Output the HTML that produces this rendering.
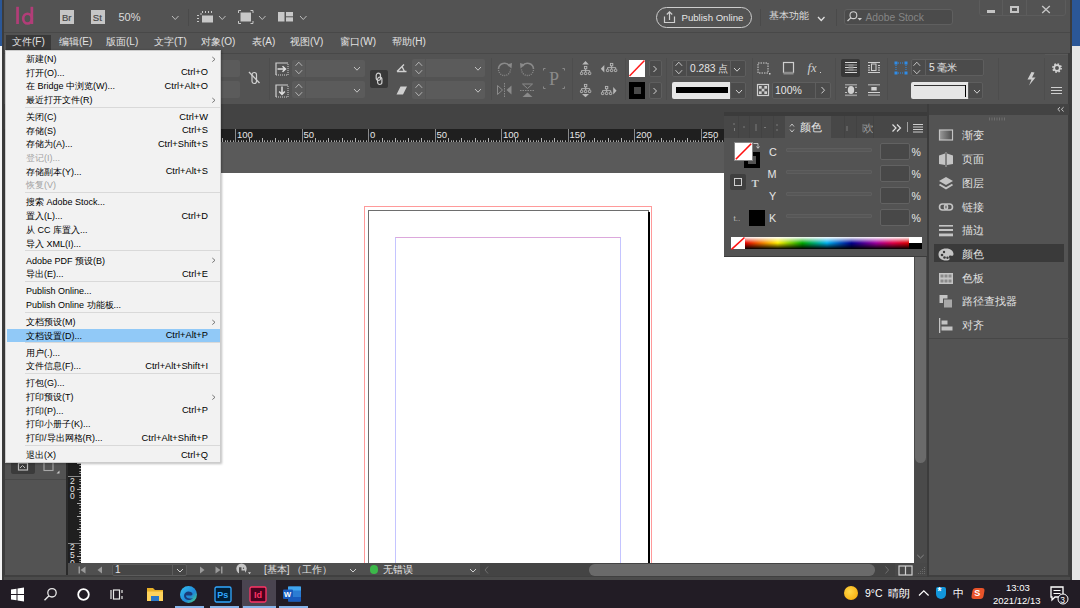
<!DOCTYPE html>
<html><head><meta charset="utf-8"><style>
*{margin:0;padding:0;box-sizing:border-box}
html,body{width:1080px;height:608px;overflow:hidden;background:#e8e8e8;font-family:"Liberation Sans",sans-serif;position:relative}
.a{position:absolute}
.t{position:absolute;white-space:nowrap;line-height:1}
svg{position:absolute;overflow:visible}
</style></head><body>
<div class="a" style="left:0;top:0;width:3px;height:46px;background:#2b5797"></div>
<div class="a" style="left:0;top:46px;width:3px;height:534px;background:#f4f4f4"></div>
<div class="a" style="left:1071px;top:0;width:9px;height:46px;background:#2b5797"></div>
<div class="a" style="left:1071px;top:46px;width:9px;height:534px;background:#e6e6e6"></div>
<div class="a" style="left:2px;top:0;width:1070px;height:580px;background:#3c3c3c"></div>
<div class="a" style="left:4px;top:0;width:1066px;height:32px;background:#535353"></div>
<div class="a" style="left:4px;top:32px;width:1066px;height:1px;background:#484848"></div>
<div class="a" style="left:4px;top:33px;width:1066px;height:20px;background:#535353"></div>
<div class="a" style="left:4px;top:53px;width:1066px;height:1px;background:#484848"></div>
<div class="a" style="left:4px;top:54px;width:1066px;height:50px;background:#535353"></div>
<div class="a" style="left:4px;top:104px;width:1066px;height:25px;background:#434343"></div>
<div class="a" style="left:5px;top:104px;width:61px;height:473px;background:#535353"></div>
<div class="a" style="left:68px;top:129px;width:859px;height:13px;background:#1f1f1f"></div>
<div class="a" style="left:68px;top:142px;width:859px;height:31px;background:#5a5a5a"></div>
<div class="a" style="left:68px;top:142px;width:13px;height:421px;background:#1f1f1f"></div>
<div class="a" style="left:81px;top:173px;width:833px;height:390px;background:#fff;overflow:hidden">
<div class="a" style="left:283px;top:33px;width:288px;height:500px;border:1px solid #ff9a9a"></div>
<div class="a" style="left:287px;top:37px;width:281px;height:500px;border:1px solid #6e6e6e"></div>
<div class="a" style="left:567px;top:39px;width:2px;height:500px;background:#000"></div>
<div class="a" style="left:314px;top:64px;width:226px;height:500px;border-top:1px solid #dca8dc;border-left:1px solid #c4c4ff;border-right:1px solid #c4c4ff"></div>
</div>
<div class="a" style="left:914px;top:142px;width:13px;height:421px;background:#4a4a4a"></div>
<div class="a" style="left:915px;top:173px;width:11px;height:290px;background:#6a6a6a;border-radius:6px"></div>
<div class="a" style="left:929px;top:104px;width:140px;height:473px;background:#535353"></div>
<div class="a" style="left:929px;top:104px;width:140px;height:10px;background:#3b3b3b"></div>
<div class="a" style="left:68px;top:563px;width:859px;height:13px;background:#535353"></div>
<div class="a" style="left:0;top:579.8px;width:1080px;height:28.2px;background:#221c25"></div>
<svg style="left:14px;top:5px" width="22" height="21" viewBox="0 0 22 21"><rect x="2.2" y="1.8" width="2.7" height="17.2" fill="#b23d78"/><ellipse cx="13.5" cy="13.6" rx="4.3" ry="4.9" fill="none" stroke="#b23d78" stroke-width="2.6"/><rect x="16.5" y="1.8" width="2.7" height="17.2" fill="#b23d78"/></svg>
<div class="a" style="left:60px;top:10px;width:14px;height:14px;background:#c6c6c6;"></div>
<div class="t" style="left:62px;top:12.64px;font-size:9.5px;color:#484848;-webkit-text-stroke:0.2px #484848">Br</div>
<div class="a" style="left:91px;top:10px;width:13.5px;height:14px;background:#c6c6c6;"></div>
<div class="t" style="left:92.8px;top:12.64px;font-size:9.5px;color:#484848;-webkit-text-stroke:0.2px #484848">St</div>
<div class="t" style="left:118.5px;top:11.61px;font-size:11px;color:#dcdcdc;">50%</div>
<svg style="left:171px;top:14.5px" width="8.5" height="5.5" viewBox="0 0 8.5 5.5"><path d="M1 1 L4.25 4.5 L7.5 1" fill="none" stroke="#bdbdbd" stroke-width="1"/></svg>
<div class="a" style="left:188px;top:9px;width:1px;height:17px;background:#4a4a4a;"></div>
<svg style="left:196px;top:10px" width="18" height="14" viewBox="0 0 18 14"><g fill="#c8c8c8"><rect x="6" y="5.5" width="11" height="7"/><rect x="6" y="1" width="1" height="2"/><rect x="9" y="1" width="1" height="2"/><rect x="12" y="1" width="1" height="2"/><rect x="15" y="1" width="1" height="2"/><rect x="4" y="3.5" width="2" height="1"/><rect x="1" y="5" width="2" height="1"/><rect x="1" y="8" width="2" height="1"/><rect x="1" y="11" width="2" height="1"/></g></svg>
<svg style="left:218px;top:14.5px" width="8.5" height="5.5" viewBox="0 0 8.5 5.5"><path d="M1 1 L4.25 4.5 L7.5 1" fill="none" stroke="#bdbdbd" stroke-width="1"/></svg>
<svg style="left:237px;top:9px" width="18" height="16" viewBox="0 0 18 16"><rect x="3.5" y="3.5" width="10.5" height="9" fill="#c8c8c8"/><path d="M1.5 4 V1.5 H4 M13.5 1.5 H16 V4 M16 12 V14.5 H13.5 M4 14.5 H1.5 V12" fill="none" stroke="#c8c8c8" stroke-width="1"/></svg>
<svg style="left:258px;top:14.5px" width="8.5" height="5.5" viewBox="0 0 8.5 5.5"><path d="M1 1 L4.25 4.5 L7.5 1" fill="none" stroke="#bdbdbd" stroke-width="1"/></svg>
<svg style="left:277px;top:11px" width="18" height="12" viewBox="0 0 18 12"><g fill="#c8c8c8"><rect x="1" y="1" width="6.5" height="9.5"/><rect x="9" y="1" width="7" height="4.3"/><rect x="9" y="6.3" width="7" height="4.2"/></g></svg>
<svg style="left:299px;top:14.5px" width="8.5" height="5.5" viewBox="0 0 8.5 5.5"><path d="M1 1 L4.25 4.5 L7.5 1" fill="none" stroke="#bdbdbd" stroke-width="1"/></svg>
<div class="a" style="left:656px;top:7px;width:96px;height:21px;border:1px solid #cdcdcd;border-radius:11px"></div>
<svg style="left:663px;top:10px" width="14" height="14" viewBox="0 0 14 14"><path d="M1.5 6.5 V12.5 H11.5 V6.5 M6.5 10 V2 M3.8 4.5 L6.5 1.8 L9.2 4.5" fill="none" stroke="#cfcfcf" stroke-width="1.2"/></svg>
<div class="t" style="left:681.5px;top:12.80px;font-size:9.6px;color:#e6e6e6;">Publish Online</div>
<div class="a" style="left:760px;top:9px;width:1px;height:17px;background:#4a4a4a;"></div>
<div class="t" style="left:769px;top:11.10px;font-size:10px;color:#dcdcdc;">基本功能</div>
<svg style="left:817px;top:16px" width="8.5" height="5.5" viewBox="0 0 8.5 5.5"><path d="M1 1 L4.25 4.5 L7.5 1" fill="none" stroke="#e0e0e0" stroke-width="1.3"/></svg>
<div class="a" style="left:836px;top:9px;width:1px;height:17px;background:#4a4a4a;"></div>
<div class="a" style="left:844px;top:8.5px;width:109px;height:16.5px;background:#4b4b4b;border:1px solid #5f5f5f;border-radius:3px"></div>
<svg style="left:846px;top:10px" width="18" height="14" viewBox="0 0 18 14"><circle cx="7.4" cy="5.2" r="3.4" fill="none" stroke="#cfcfcf" stroke-width="1.1"/><path d="M5 7.6 L1.5 11" stroke="#cfcfcf" stroke-width="1.2"/><path d="M11.5 8 H16 L13.75 10.5Z" fill="#cfcfcf"/></svg>
<div class="t" style="left:865.5px;top:12.85px;font-size:10.3px;color:#858585;">Adobe Stock</div>
<div class="a" style="left:979px;top:-2px;width:87px;height:18.3px;border:1px solid #5c5c5c;border-radius:3px"></div>
<div class="a" style="left:1002px;top:0px;width:1px;height:16px;background:#5c5c5c;"></div>
<div class="a" style="left:1025.5px;top:0px;width:1px;height:16px;background:#5c5c5c;"></div>
<div class="a" style="left:987px;top:10px;width:8px;height:3px;background:#c4c4c4;"></div>
<div class="a" style="left:1010px;top:6px;width:9px;height:7px;border:2px solid #c4c4c4"></div>
<svg style="left:1041px;top:5px" width="10" height="9" viewBox="0 0 10 9"><path d="M1.2 1 L8.8 8 M8.8 1 L1.2 8" stroke="#c4c4c4" stroke-width="1.4"/></svg>
<div class="a" style="left:6px;top:35px;width:45px;height:14.5px;background:#393939;"></div>
<div class="t" style="left:12px;top:37.40px;font-size:10px;color:#e2e2e2;">文件(F)</div>
<div class="t" style="left:59px;top:37.40px;font-size:10px;color:#e2e2e2;">编辑(E)</div>
<div class="t" style="left:106px;top:37.40px;font-size:10px;color:#e2e2e2;">版面(L)</div>
<div class="t" style="left:154px;top:37.40px;font-size:10px;color:#e2e2e2;">文字(T)</div>
<div class="t" style="left:201px;top:37.40px;font-size:10px;color:#e2e2e2;">对象(O)</div>
<div class="t" style="left:252px;top:37.40px;font-size:10px;color:#e2e2e2;">表(A)</div>
<div class="t" style="left:290px;top:37.40px;font-size:10px;color:#e2e2e2;">视图(V)</div>
<div class="t" style="left:340px;top:37.40px;font-size:10px;color:#e2e2e2;">窗口(W)</div>
<div class="t" style="left:392px;top:37.40px;font-size:10px;color:#e2e2e2;">帮助(H)</div>
<div class="a" style="left:200px;top:59.6px;width:40px;height:17.4px;background:#5b5b5b;border-radius:2px;"></div>
<div class="a" style="left:200px;top:81px;width:40px;height:17.4px;background:#5b5b5b;border-radius:2px;"></div>
<svg style="left:247px;top:70px" width="14" height="16" viewBox="0 0 14 16"><rect x="5" y="2.5" width="4.5" height="11" rx="2.2" fill="none" stroke="#cfcfcf" stroke-width="1.2"/><path d="M2 2 L12.5 13" stroke="#cfcfcf" stroke-width="1.3"/></svg>
<div class="a" style="left:269px;top:58px;width:1px;height:42px;background:#4d4d4d;"></div>
<svg style="left:274px;top:61px" width="16" height="16" viewBox="0 0 16 16"><path d="M2 14 V2 H14" fill="none" stroke="#cfcfcf" stroke-width="1.2"/><path d="M14 3 V14 H2" fill="none" stroke="#cfcfcf" stroke-width="1" stroke-dasharray="1 1"/><path d="M3.5 8 H11 M8.5 5.2 L11.5 8 L8.5 10.8" fill="none" stroke="#e0e0e0" stroke-width="1.5"/></svg>
<svg style="left:274px;top:83px" width="16" height="16" viewBox="0 0 16 16"><path d="M2 14 V2 H14" fill="none" stroke="#cfcfcf" stroke-width="1.2"/><path d="M14 3 V14 H2" fill="none" stroke="#cfcfcf" stroke-width="1" stroke-dasharray="1 1"/><path d="M8 3.5 V11 M5.2 8.5 L8 11.5 L10.8 8.5" fill="none" stroke="#e0e0e0" stroke-width="1.5"/></svg>
<div class="a" style="left:291.5px;top:59.6px;width:73px;height:17.4px;background:#5b5b5b;border-radius:2px;"></div>
<div class="a" style="left:305px;top:59.6px;width:1px;height:17.4px;background:#555555;"></div>
<svg style="left:293.7px;top:60.3px" width="10" height="16" viewBox="0 0 10 16"><path d="M1.5 5.8 L4.8 2.2 L8.1 5.8 M1.5 10.2 L4.8 13.8 L8.1 10.2" fill="none" stroke="#bdbdbd" stroke-width="0.9"/></svg>
<svg style="left:353px;top:66.4px" width="8" height="5.2" viewBox="0 0 8 5.2"><path d="M1 1 L4.0 4.2 L7 1" fill="none" stroke="#c4c4c4" stroke-width="1"/></svg>
<div class="a" style="left:291.5px;top:81px;width:73px;height:17.4px;background:#5b5b5b;border-radius:2px;"></div>
<div class="a" style="left:305px;top:81px;width:1px;height:17.4px;background:#555555;"></div>
<svg style="left:293.7px;top:81.7px" width="10" height="16" viewBox="0 0 10 16"><path d="M1.5 5.8 L4.8 2.2 L8.1 5.8 M1.5 10.2 L4.8 13.8 L8.1 10.2" fill="none" stroke="#bdbdbd" stroke-width="0.9"/></svg>
<svg style="left:353px;top:87.8px" width="8" height="5.2" viewBox="0 0 8 5.2"><path d="M1 1 L4.0 4.2 L7 1" fill="none" stroke="#c4c4c4" stroke-width="1"/></svg>
<div class="a" style="left:370px;top:70px;width:18px;height:18px;background:#383838;border-radius:2px"></div>
<svg style="left:374px;top:72px" width="10" height="14" viewBox="0 0 10 14"><rect x="2.2" y="1.2" width="4.3" height="7.3" rx="2.15" fill="none" stroke="#d0d0d0" stroke-width="1.2"/><rect x="3.6" y="5.2" width="4.3" height="7.3" rx="2.15" fill="none" stroke="#d0d0d0" stroke-width="1.2"/></svg>
<svg style="left:395px;top:62px" width="14" height="12" viewBox="0 0 14 12"><path d="M2 9.5 H11.5 M2 9.5 L9 2.5 M7 4.5 L9.5 9.5" fill="none" stroke="#d0d0d0" stroke-width="1.4"/></svg>
<svg style="left:395px;top:84px" width="14" height="12" viewBox="0 0 14 12"><path d="M5.5 2.5 H12 L8 10.5 H1.5Z" fill="#cfcfcf"/></svg>
<div class="a" style="left:411.7px;top:59.3px;width:73.3px;height:17.5px;background:#5b5b5b;border-radius:2px;"></div>
<div class="a" style="left:425px;top:59.3px;width:1px;height:17.5px;background:#555555;"></div>
<svg style="left:413.7px;top:60.0px" width="10" height="16" viewBox="0 0 10 16"><path d="M1.5 5.8 L4.8 2.2 L8.1 5.8 M1.5 10.2 L4.8 13.8 L8.1 10.2" fill="none" stroke="#bdbdbd" stroke-width="0.9"/></svg>
<svg style="left:473.5px;top:66.1px" width="8" height="5.2" viewBox="0 0 8 5.2"><path d="M1 1 L4.0 4.2 L7 1" fill="none" stroke="#c4c4c4" stroke-width="1"/></svg>
<div class="a" style="left:411.7px;top:81px;width:73.3px;height:17.5px;background:#5b5b5b;border-radius:2px;"></div>
<div class="a" style="left:425px;top:81px;width:1px;height:17.5px;background:#555555;"></div>
<svg style="left:413.7px;top:81.7px" width="10" height="16" viewBox="0 0 10 16"><path d="M1.5 5.8 L4.8 2.2 L8.1 5.8 M1.5 10.2 L4.8 13.8 L8.1 10.2" fill="none" stroke="#bdbdbd" stroke-width="0.9"/></svg>
<svg style="left:473.5px;top:87.8px" width="8" height="5.2" viewBox="0 0 8 5.2"><path d="M1 1 L4.0 4.2 L7 1" fill="none" stroke="#c4c4c4" stroke-width="1"/></svg>
<div class="a" style="left:491px;top:58px;width:1px;height:42px;background:#4d4d4d;"></div>
<svg style="left:496px;top:60px" width="17" height="16" viewBox="0 0 17 16"><path d="M2.5 9 A6 6 0 0 1 13.5 6" fill="none" stroke="#8a8a8a" stroke-width="1.6"/><path d="M11 4.5 L16 3 L15.5 8.5Z" fill="#8a8a8a"/><path d="M14.5 9.5 A6 6 0 0 1 2.5 9.5" fill="none" stroke="#8a8a8a" stroke-width="1.3" stroke-dasharray="1 1.1"/></svg>
<svg style="left:519px;top:60px" width="17" height="16" viewBox="0 0 17 16"><path d="M14.5 9 A6 6 0 0 0 3.5 6" fill="none" stroke="#8a8a8a" stroke-width="1.6"/><path d="M6 4.5 L1 3 L1.5 8.5Z" fill="#8a8a8a"/><path d="M2.5 9.5 A6 6 0 0 0 14.5 9.5" fill="none" stroke="#8a8a8a" stroke-width="1.3" stroke-dasharray="1 1.1"/></svg>
<svg style="left:496px;top:82px" width="17" height="16" viewBox="0 0 17 16"><path d="M8.5 1 V15" stroke="#8a8a8a" stroke-width="1" stroke-dasharray="1.5 1"/><path d="M1.5 3.5 V12.5 L6.5 8Z" fill="none" stroke="#8a8a8a" stroke-width="1"/><path d="M15.5 3.5 V12.5 L10.5 8Z" fill="#8a8a8a"/></svg>
<svg style="left:519px;top:82px" width="17" height="16" viewBox="0 0 17 16"><path d="M1 8.5 H16" stroke="#8a8a8a" stroke-width="1" stroke-dasharray="1.5 1"/><path d="M3.5 2 H13.5 L8.5 6.5Z" fill="none" stroke="#8a8a8a" stroke-width="1"/><path d="M3.5 15 H13.5 L8.5 10.5Z" fill="#8a8a8a"/></svg>
<svg style="left:542px;top:67px" width="24" height="24" viewBox="0 0 24 24"><path d="M1.5 3.5 V1.5 H3.5 M20.5 1.5 H22.5 V3.5 M22.5 19.5 V21.5 H20.5 M3.5 21.5 H1.5 V19.5" fill="none" stroke="#8a8a8a" stroke-width="1"/></svg>
<div class="t" style="left:549px;top:69.98px;font-size:18px;color:#8a8a8a;font-family:Liberation Serif,serif">P</div>
<div class="a" style="left:572px;top:58px;width:1px;height:42px;background:#4d4d4d;"></div>
<svg style="left:575px;top:56px" width="50" height="44" viewBox="0 0 50 44"><g fill="none" stroke="#b8b8b8" stroke-width="0.9"><rect x="9.4" y="10.4" width="2.4" height="2.4"/><path d="M10.6 12.8 V14.6 M6.5 16 V14.6 H14.7 V16 M10.6 14.6 V16"/><rect x="5.4" y="16.2" width="2.4" height="2.4" rx="0.6"/><rect x="9.4" y="16.2" width="2.4" height="2.4" rx="0.6"/><rect x="13.4" y="16.2" width="2.4" height="2.4" rx="0.6"/></g><g fill="none" stroke="#b8b8b8" stroke-width="0.9"><rect x="9.4" y="28.4" width="2.4" height="2.4"/><path d="M10.6 30.8 V32.6 M6.5 34 V32.6 H14.7 V34 M10.6 32.6 V34"/><rect x="5.4" y="34.2" width="2.4" height="2.4" rx="0.6"/><rect x="9.4" y="34.2" width="2.4" height="2.4" rx="0.6"/><rect x="13.4" y="34.2" width="2.4" height="2.4" rx="0.6"/></g><g fill="none" stroke="#b8b8b8" stroke-width="0.9"><rect x="35.4" y="7.4" width="2.4" height="2.4"/><path d="M36.6 9.8 V11.6 M32.5 13 V11.6 H40.7 V13 M36.6 11.6 V13"/><rect x="31.4" y="13.2" width="2.4" height="2.4" rx="0.6"/><rect x="35.4" y="13.2" width="2.4" height="2.4" rx="0.6"/><rect x="39.4" y="13.2" width="2.4" height="2.4" rx="0.6"/></g><g fill="none" stroke="#b8b8b8" stroke-width="0.9"><rect x="30.4" y="30.4" width="2.4" height="2.4"/><path d="M31.6 32.8 V34.6 M27.5 36 V34.6 H35.7 V36 M31.6 34.6 V36"/><rect x="26.4" y="36.2" width="2.4" height="2.4" rx="0.6"/><rect x="30.4" y="36.2" width="2.4" height="2.4" rx="0.6"/><rect x="34.4" y="36.2" width="2.4" height="2.4" rx="0.6"/></g><path d="M7.2 8.5 L10.5 5 L13.8 8.5Z" fill="#b8b8b8"/><path d="M7 38 L10.5 41.3 L14 38Z" fill="#b8b8b8"/><path d="M29.3 9 L25.8 12.8 L29.3 16.6Z" fill="#b8b8b8"/><path d="M38.2 31 L41.6 34.8 L38.2 38.6Z" fill="#b8b8b8"/></svg>
<div class="a" style="left:625px;top:58px;width:1px;height:42px;background:#4d4d4d;"></div>
<div class="a" style="left:629px;top:60px;width:16px;height:16.5px;background:#ffffff;"></div>
<svg style="left:629px;top:60px" width="16" height="17" viewBox="0 0 16 17"><path d="M0.5 16 L15.5 0.5" stroke="#ff1a1a" stroke-width="1.5"/></svg>
<div class="a" style="left:629px;top:82px;width:16px;height:16.5px;background:#000000;"></div>
<div class="a" style="left:633.5px;top:86.5px;width:7px;height:7.5px;background:#4a4a4a;"></div>
<div class="a" style="left:648.5px;top:60px;width:13px;height:16.5px;background:#4b4b4b;border:1px solid #5e5e5e;border-radius:2px"></div>
<svg style="left:652px;top:64.5px" width="6" height="8" viewBox="0 0 6 8"><path d="M1.5 1 L4.5 4 L1.5 7" fill="none" stroke="#cfcfcf" stroke-width="1"/></svg>
<div class="a" style="left:648.5px;top:82px;width:13px;height:16.5px;background:#4b4b4b;border:1px solid #5e5e5e;border-radius:2px"></div>
<svg style="left:652px;top:86.5px" width="6" height="8" viewBox="0 0 6 8"><path d="M1.5 1 L4.5 4 L1.5 7" fill="none" stroke="#cfcfcf" stroke-width="1"/></svg>
<div class="a" style="left:666px;top:58px;width:1px;height:42px;background:#4d4d4d;"></div>
<div class="a" style="left:672.3px;top:60px;width:74px;height:16.5px;background:#4b4b4b;border:1px solid #5e5e5e;border-radius:2px"></div>
<div class="a" style="left:686px;top:60px;width:1px;height:16.5px;background:#5e5e5e;"></div>
<div class="a" style="left:730px;top:60px;width:1px;height:16.5px;background:#5e5e5e;"></div>
<svg style="left:673.7px;top:60.3px" width="10" height="16" viewBox="0 0 10 16"><path d="M1.5 5.8 L4.8 2.2 L8.1 5.8 M1.5 10.2 L4.8 13.8 L8.1 10.2" fill="none" stroke="#cfcfcf" stroke-width="0.9"/></svg>
<div class="t" style="left:690px;top:63.60px;font-size:10.2px;color:#e6e6e6;">0.283 点</div>
<svg style="left:733px;top:66.5px" width="8" height="5.2" viewBox="0 0 8 5.2"><path d="M1 1 L4.0 4.2 L7 1" fill="none" stroke="#cfcfcf" stroke-width="1"/></svg>
<div class="a" style="left:672.3px;top:82px;width:58px;height:16.5px;background:#e6e6e6;border-radius:2px 0 0 2px"></div>
<div class="a" style="left:676px;top:87px;width:52px;height:5.5px;background:#000;"></div>
<div class="a" style="left:730px;top:82px;width:16.3px;height:16.5px;background:#4b4b4b;border:1px solid #5e5e5e;border-radius:0 2px 2px 0"></div>
<svg style="left:734.5px;top:88.5px" width="8" height="5.2" viewBox="0 0 8 5.2"><path d="M1 1 L4.0 4.2 L7 1" fill="none" stroke="#cfcfcf" stroke-width="1"/></svg>
<div class="a" style="left:752px;top:58px;width:1px;height:42px;background:#4d4d4d;"></div>
<svg style="left:756px;top:61px" width="16" height="15" viewBox="0 0 16 15"><path d="M2 2 H12 V12 H2Z" fill="none" stroke="#cfcfcf" stroke-width="1" stroke-dasharray="1.5 1"/><rect x="13" y="12" width="1.5" height="1.5" fill="#cfcfcf"/></svg>
<svg style="left:781px;top:61px" width="16" height="15" viewBox="0 0 16 15"><rect x="2.5" y="1.5" width="10" height="10" fill="none" stroke="#cfcfcf" stroke-width="1.2"/><rect x="2.5" y="11" width="10" height="2.5" fill="#8d8d8d"/></svg>
<div class="t" style="left:807.5px;top:62.17px;font-size:12.5px;color:#d0d0d0;font-style:italic;font-family:Liberation Serif,serif">fx</div>
<div class="a" style="left:819.5px;top:71.8px;width:1.2px;height:1.2px;background:#cfcfcf;"></div>
<svg style="left:756px;top:83px" width="15" height="15" viewBox="0 0 15 15"><rect x="1.5" y="1.5" width="11" height="11" fill="none" stroke="#cfcfcf" stroke-width="1.2"/><g fill="#cfcfcf"><rect x="3" y="3" width="2.7" height="2.7"/><rect x="8.3" y="3" width="2.7" height="2.7"/><rect x="5.7" y="5.7" width="2.7" height="2.7"/><rect x="3" y="8.3" width="2.7" height="2.7"/><rect x="8.3" y="8.3" width="2.7" height="2.7"/></g></svg>
<div class="a" style="left:772.4px;top:81.5px;width:59px;height:17.3px;background:#4b4b4b;border:1px solid #5e5e5e;border-radius:2px"></div>
<div class="a" style="left:815px;top:81.5px;width:1px;height:17.3px;background:#5e5e5e;"></div>
<div class="t" style="left:775px;top:85.16px;font-size:10.5px;color:#e6e6e6;">100%</div>
<svg style="left:820px;top:86px" width="6" height="9" viewBox="0 0 6 9"><path d="M1.5 1 L4.5 4.2 L1.5 7.4" fill="none" stroke="#cfcfcf" stroke-width="1"/></svg>
<div class="a" style="left:834.5px;top:58px;width:1px;height:42px;background:#4d4d4d;"></div>
<div class="a" style="left:841.4px;top:58.5px;width:19px;height:18.3px;background:#383838;border-radius:2px"></div>
<svg style="left:844px;top:61px" width="14" height="13" viewBox="0 0 14 13"><g fill="#d8d8d8"><rect x="1" y="1" width="12" height="1"/><rect x="1" y="3.5" width="12" height="1" fill="#a0a0a0"/><rect x="1" y="6" width="12" height="1"/><rect x="1" y="8.5" width="12" height="1" fill="#a0a0a0"/><rect x="1" y="11" width="12" height="1"/></g><rect x="4.5" y="3" width="5" height="7" fill="#8a8a8a" opacity="0.7"/></svg>
<svg style="left:867px;top:61px" width="14" height="13" viewBox="0 0 14 13"><g fill="#cfcfcf"><rect x="1" y="1" width="12" height="1"/><rect x="1" y="11" width="12" height="1"/><rect x="1" y="4" width="2" height="1"/><rect x="11" y="4" width="2" height="1"/><rect x="1" y="6.3" width="2" height="1"/><rect x="11" y="6.3" width="2" height="1"/><rect x="1" y="8.6" width="2" height="1"/><rect x="11" y="8.6" width="2" height="1"/></g><rect x="4.5" y="3" width="4.5" height="6.5" fill="none" stroke="#cfcfcf" stroke-width="1"/></svg>
<svg style="left:844px;top:83px" width="14" height="14" viewBox="0 0 14 14"><g fill="#bdbdbd"><rect x="1" y="1" width="12" height="1.5" fill="#9a9a9a"/><rect x="1" y="3.8" width="2" height="1"/><rect x="11" y="3.8" width="2" height="1"/><rect x="1" y="9" width="2" height="1"/><rect x="11" y="9" width="2" height="1"/><rect x="1" y="11.5" width="12" height="1.6" fill="#9a9a9a"/></g><ellipse cx="7" cy="6.9" rx="3.2" ry="4" fill="#d0d0d0"/></svg>
<svg style="left:867px;top:83px" width="14" height="14" viewBox="0 0 14 14"><g><rect x="1" y="1" width="12" height="1.5" fill="#9a9a9a"/><rect x="4.3" y="4" width="5.4" height="3.5" fill="#d4d4d4"/><rect x="1" y="9" width="12" height="1" fill="#d4d4d4"/><rect x="1" y="11.3" width="12" height="1.6" fill="#9a9a9a"/></g></svg>
<div class="a" style="left:887px;top:58px;width:1px;height:42px;background:#4d4d4d;"></div>
<svg style="left:893px;top:60px" width="16" height="16" viewBox="0 0 16 16"><g fill="#2f8ce8"><rect x="1.5" y="1.5" width="3" height="3"/><rect x="11.5" y="1.5" width="3" height="3"/><rect x="1.5" y="11.5" width="3" height="3"/><rect x="11.5" y="11.5" width="3" height="3"/></g><path d="M3 5 V11 M13 5 V11 M5 3 H11 M5 13 H11" stroke="#2f8ce8" stroke-width="1" stroke-dasharray="1 1"/></svg>
<div class="a" style="left:911px;top:59.4px;width:72.5px;height:16.8px;background:#4b4b4b;border:1px solid #5e5e5e;border-radius:2px"></div>
<div class="a" style="left:925px;top:59.4px;width:1px;height:16.8px;background:#5e5e5e;"></div>
<svg style="left:912.2px;top:59.8px" width="10" height="16" viewBox="0 0 10 16"><path d="M1.5 5.8 L4.8 2.2 L8.1 5.8 M1.5 10.2 L4.8 13.8 L8.1 10.2" fill="none" stroke="#cfcfcf" stroke-width="0.9"/></svg>
<div class="t" style="left:929px;top:63.20px;font-size:10.2px;color:#e6e6e6;">5 毫米</div>
<div class="a" style="left:911px;top:82px;width:57.5px;height:16.8px;background:#e6e6e6;border-radius:2px 0 0 2px"></div>
<div class="a" style="left:914px;top:84.5px;width:52px;height:1px;background:#333;"></div>
<div class="a" style="left:965px;top:84.5px;width:1.2px;height:12px;background:#000;"></div>
<div class="a" style="left:968.3px;top:82px;width:15.2px;height:16.8px;background:#4b4b4b;border:1px solid #5e5e5e;border-radius:0 2px 2px 0"></div>
<svg style="left:972.5px;top:88.5px" width="8" height="5.2" viewBox="0 0 8 5.2"><path d="M1 1 L4.0 4.2 L7 1" fill="none" stroke="#cfcfcf" stroke-width="1"/></svg>
<div class="a" style="left:998px;top:58px;width:1px;height:42px;background:#4d4d4d;"></div>
<svg style="left:1025px;top:71px" width="13" height="16" viewBox="0 0 13 16"><path d="M6.5 1 L2.5 8.5 H6.5 L4 14.5 L10.5 6.5 H7 L9.5 1.5Z" fill="#cfcfcf"/></svg>
<div class="a" style="left:1044px;top:58px;width:1px;height:42px;background:#4d4d4d;"></div>
<svg style="left:1051px;top:61.5px" width="12" height="12" viewBox="0 0 12 12"><circle cx="6" cy="6" r="4.1" fill="none" stroke="#d4d4d4" stroke-width="1.6" stroke-dasharray="1.6 1.62"/><circle cx="6" cy="6" r="2.8" fill="none" stroke="#d4d4d4" stroke-width="1.7"/></svg>
<svg style="left:1050px;top:85px" width="14" height="10" viewBox="0 0 14 10"><path d="M1 2.5 H12 M1 5.5 H12 M1 8.5 H12" stroke="#cfcfcf" stroke-width="1"/></svg>
<svg style="left:68px;top:129px" width="656" height="13" viewBox="0 0 656 13"><rect x="0" y="11.3" width="1" height="1.7" fill="#a8a8a8"/><rect x="2" y="11.3" width="1" height="1.7" fill="#a8a8a8"/><rect x="5" y="11.3" width="1" height="1.7" fill="#a8a8a8"/><rect x="8" y="9" width="1" height="4" fill="#b0b0b0"/><rect x="10" y="11.3" width="1" height="1.7" fill="#a8a8a8"/><rect x="13" y="11.3" width="1" height="1.7" fill="#a8a8a8"/><rect x="16" y="11.3" width="1" height="1.7" fill="#a8a8a8"/><rect x="18" y="11.3" width="1" height="1.7" fill="#a8a8a8"/><rect x="21" y="9" width="1" height="4" fill="#b0b0b0"/><rect x="24" y="11.3" width="1" height="1.7" fill="#a8a8a8"/><rect x="26" y="11.3" width="1" height="1.7" fill="#a8a8a8"/><rect x="29" y="11.3" width="1" height="1.7" fill="#a8a8a8"/><rect x="32" y="11.3" width="1" height="1.7" fill="#a8a8a8"/><rect x="34" y="0" width="1" height="13" fill="#8a8a8a"/><rect x="37" y="11.3" width="1" height="1.7" fill="#a8a8a8"/><rect x="40" y="11.3" width="1" height="1.7" fill="#a8a8a8"/><rect x="42" y="11.3" width="1" height="1.7" fill="#a8a8a8"/><rect x="45" y="11.3" width="1" height="1.7" fill="#a8a8a8"/><rect x="48" y="9" width="1" height="4" fill="#b0b0b0"/><rect x="50" y="11.3" width="1" height="1.7" fill="#a8a8a8"/><rect x="53" y="11.3" width="1" height="1.7" fill="#a8a8a8"/><rect x="55" y="11.3" width="1" height="1.7" fill="#a8a8a8"/><rect x="58" y="11.3" width="1" height="1.7" fill="#a8a8a8"/><rect x="61" y="9" width="1" height="4" fill="#b0b0b0"/><rect x="63" y="11.3" width="1" height="1.7" fill="#a8a8a8"/><rect x="66" y="11.3" width="1" height="1.7" fill="#a8a8a8"/><rect x="69" y="11.3" width="1" height="1.7" fill="#a8a8a8"/><rect x="71" y="11.3" width="1" height="1.7" fill="#a8a8a8"/><rect x="74" y="9" width="1" height="4" fill="#b0b0b0"/><rect x="77" y="11.3" width="1" height="1.7" fill="#a8a8a8"/><rect x="79" y="11.3" width="1" height="1.7" fill="#a8a8a8"/><rect x="82" y="11.3" width="1" height="1.7" fill="#a8a8a8"/><rect x="85" y="11.3" width="1" height="1.7" fill="#a8a8a8"/><rect x="87" y="9" width="1" height="4" fill="#b0b0b0"/><rect x="90" y="11.3" width="1" height="1.7" fill="#a8a8a8"/><rect x="93" y="11.3" width="1" height="1.7" fill="#a8a8a8"/><rect x="95" y="11.3" width="1" height="1.7" fill="#a8a8a8"/><rect x="98" y="11.3" width="1" height="1.7" fill="#a8a8a8"/><rect x="101" y="0" width="1" height="13" fill="#8a8a8a"/><rect x="103" y="11.3" width="1" height="1.7" fill="#a8a8a8"/><rect x="106" y="11.3" width="1" height="1.7" fill="#a8a8a8"/><rect x="109" y="11.3" width="1" height="1.7" fill="#a8a8a8"/><rect x="111" y="11.3" width="1" height="1.7" fill="#a8a8a8"/><rect x="114" y="9" width="1" height="4" fill="#b0b0b0"/><rect x="117" y="11.3" width="1" height="1.7" fill="#a8a8a8"/><rect x="119" y="11.3" width="1" height="1.7" fill="#a8a8a8"/><rect x="122" y="11.3" width="1" height="1.7" fill="#a8a8a8"/><rect x="125" y="11.3" width="1" height="1.7" fill="#a8a8a8"/><rect x="127" y="9" width="1" height="4" fill="#b0b0b0"/><rect x="130" y="11.3" width="1" height="1.7" fill="#a8a8a8"/><rect x="133" y="11.3" width="1" height="1.7" fill="#a8a8a8"/><rect x="135" y="11.3" width="1" height="1.7" fill="#a8a8a8"/><rect x="138" y="11.3" width="1" height="1.7" fill="#a8a8a8"/><rect x="141" y="9" width="1" height="4" fill="#b0b0b0"/><rect x="143" y="11.3" width="1" height="1.7" fill="#a8a8a8"/><rect x="146" y="11.3" width="1" height="1.7" fill="#a8a8a8"/><rect x="149" y="11.3" width="1" height="1.7" fill="#a8a8a8"/><rect x="151" y="11.3" width="1" height="1.7" fill="#a8a8a8"/><rect x="154" y="9" width="1" height="4" fill="#b0b0b0"/><rect x="157" y="11.3" width="1" height="1.7" fill="#a8a8a8"/><rect x="159" y="11.3" width="1" height="1.7" fill="#a8a8a8"/><rect x="162" y="11.3" width="1" height="1.7" fill="#a8a8a8"/><rect x="165" y="11.3" width="1" height="1.7" fill="#a8a8a8"/><rect x="167" y="0" width="1" height="13" fill="#8a8a8a"/><rect x="170" y="11.3" width="1" height="1.7" fill="#a8a8a8"/><rect x="173" y="11.3" width="1" height="1.7" fill="#a8a8a8"/><rect x="175" y="11.3" width="1" height="1.7" fill="#a8a8a8"/><rect x="178" y="11.3" width="1" height="1.7" fill="#a8a8a8"/><rect x="181" y="9" width="1" height="4" fill="#b0b0b0"/><rect x="183" y="11.3" width="1" height="1.7" fill="#a8a8a8"/><rect x="186" y="11.3" width="1" height="1.7" fill="#a8a8a8"/><rect x="188" y="11.3" width="1" height="1.7" fill="#a8a8a8"/><rect x="191" y="11.3" width="1" height="1.7" fill="#a8a8a8"/><rect x="194" y="9" width="1" height="4" fill="#b0b0b0"/><rect x="196" y="11.3" width="1" height="1.7" fill="#a8a8a8"/><rect x="199" y="11.3" width="1" height="1.7" fill="#a8a8a8"/><rect x="202" y="11.3" width="1" height="1.7" fill="#a8a8a8"/><rect x="204" y="11.3" width="1" height="1.7" fill="#a8a8a8"/><rect x="207" y="9" width="1" height="4" fill="#b0b0b0"/><rect x="210" y="11.3" width="1" height="1.7" fill="#a8a8a8"/><rect x="212" y="11.3" width="1" height="1.7" fill="#a8a8a8"/><rect x="215" y="11.3" width="1" height="1.7" fill="#a8a8a8"/><rect x="218" y="11.3" width="1" height="1.7" fill="#a8a8a8"/><rect x="220" y="9" width="1" height="4" fill="#b0b0b0"/><rect x="223" y="11.3" width="1" height="1.7" fill="#a8a8a8"/><rect x="226" y="11.3" width="1" height="1.7" fill="#a8a8a8"/><rect x="228" y="11.3" width="1" height="1.7" fill="#a8a8a8"/><rect x="231" y="11.3" width="1" height="1.7" fill="#a8a8a8"/><rect x="234" y="0" width="1" height="13" fill="#8a8a8a"/><rect x="236" y="11.3" width="1" height="1.7" fill="#a8a8a8"/><rect x="239" y="11.3" width="1" height="1.7" fill="#a8a8a8"/><rect x="242" y="11.3" width="1" height="1.7" fill="#a8a8a8"/><rect x="244" y="11.3" width="1" height="1.7" fill="#a8a8a8"/><rect x="247" y="9" width="1" height="4" fill="#b0b0b0"/><rect x="250" y="11.3" width="1" height="1.7" fill="#a8a8a8"/><rect x="252" y="11.3" width="1" height="1.7" fill="#a8a8a8"/><rect x="255" y="11.3" width="1" height="1.7" fill="#a8a8a8"/><rect x="258" y="11.3" width="1" height="1.7" fill="#a8a8a8"/><rect x="260" y="9" width="1" height="4" fill="#b0b0b0"/><rect x="263" y="11.3" width="1" height="1.7" fill="#a8a8a8"/><rect x="266" y="11.3" width="1" height="1.7" fill="#a8a8a8"/><rect x="268" y="11.3" width="1" height="1.7" fill="#a8a8a8"/><rect x="271" y="11.3" width="1" height="1.7" fill="#a8a8a8"/><rect x="274" y="9" width="1" height="4" fill="#b0b0b0"/><rect x="276" y="11.3" width="1" height="1.7" fill="#a8a8a8"/><rect x="279" y="11.3" width="1" height="1.7" fill="#a8a8a8"/><rect x="282" y="11.3" width="1" height="1.7" fill="#a8a8a8"/><rect x="284" y="11.3" width="1" height="1.7" fill="#a8a8a8"/><rect x="287" y="9" width="1" height="4" fill="#b0b0b0"/><rect x="290" y="11.3" width="1" height="1.7" fill="#a8a8a8"/><rect x="292" y="11.3" width="1" height="1.7" fill="#a8a8a8"/><rect x="295" y="11.3" width="1" height="1.7" fill="#a8a8a8"/><rect x="298" y="11.3" width="1" height="1.7" fill="#a8a8a8"/><rect x="300" y="0" width="1" height="13" fill="#8a8a8a"/><rect x="303" y="11.3" width="1" height="1.7" fill="#a8a8a8"/><rect x="306" y="11.3" width="1" height="1.7" fill="#a8a8a8"/><rect x="308" y="11.3" width="1" height="1.7" fill="#a8a8a8"/><rect x="311" y="11.3" width="1" height="1.7" fill="#a8a8a8"/><rect x="314" y="9" width="1" height="4" fill="#b0b0b0"/><rect x="316" y="11.3" width="1" height="1.7" fill="#a8a8a8"/><rect x="319" y="11.3" width="1" height="1.7" fill="#a8a8a8"/><rect x="321" y="11.3" width="1" height="1.7" fill="#a8a8a8"/><rect x="324" y="11.3" width="1" height="1.7" fill="#a8a8a8"/><rect x="327" y="9" width="1" height="4" fill="#b0b0b0"/><rect x="329" y="11.3" width="1" height="1.7" fill="#a8a8a8"/><rect x="332" y="11.3" width="1" height="1.7" fill="#a8a8a8"/><rect x="335" y="11.3" width="1" height="1.7" fill="#a8a8a8"/><rect x="337" y="11.3" width="1" height="1.7" fill="#a8a8a8"/><rect x="340" y="9" width="1" height="4" fill="#b0b0b0"/><rect x="343" y="11.3" width="1" height="1.7" fill="#a8a8a8"/><rect x="345" y="11.3" width="1" height="1.7" fill="#a8a8a8"/><rect x="348" y="11.3" width="1" height="1.7" fill="#a8a8a8"/><rect x="351" y="11.3" width="1" height="1.7" fill="#a8a8a8"/><rect x="353" y="9" width="1" height="4" fill="#b0b0b0"/><rect x="356" y="11.3" width="1" height="1.7" fill="#a8a8a8"/><rect x="359" y="11.3" width="1" height="1.7" fill="#a8a8a8"/><rect x="361" y="11.3" width="1" height="1.7" fill="#a8a8a8"/><rect x="364" y="11.3" width="1" height="1.7" fill="#a8a8a8"/><rect x="367" y="0" width="1" height="13" fill="#8a8a8a"/><rect x="369" y="11.3" width="1" height="1.7" fill="#a8a8a8"/><rect x="372" y="11.3" width="1" height="1.7" fill="#a8a8a8"/><rect x="375" y="11.3" width="1" height="1.7" fill="#a8a8a8"/><rect x="377" y="11.3" width="1" height="1.7" fill="#a8a8a8"/><rect x="380" y="9" width="1" height="4" fill="#b0b0b0"/><rect x="383" y="11.3" width="1" height="1.7" fill="#a8a8a8"/><rect x="385" y="11.3" width="1" height="1.7" fill="#a8a8a8"/><rect x="388" y="11.3" width="1" height="1.7" fill="#a8a8a8"/><rect x="391" y="11.3" width="1" height="1.7" fill="#a8a8a8"/><rect x="393" y="9" width="1" height="4" fill="#b0b0b0"/><rect x="396" y="11.3" width="1" height="1.7" fill="#a8a8a8"/><rect x="399" y="11.3" width="1" height="1.7" fill="#a8a8a8"/><rect x="401" y="11.3" width="1" height="1.7" fill="#a8a8a8"/><rect x="404" y="11.3" width="1" height="1.7" fill="#a8a8a8"/><rect x="407" y="9" width="1" height="4" fill="#b0b0b0"/><rect x="409" y="11.3" width="1" height="1.7" fill="#a8a8a8"/><rect x="412" y="11.3" width="1" height="1.7" fill="#a8a8a8"/><rect x="415" y="11.3" width="1" height="1.7" fill="#a8a8a8"/><rect x="417" y="11.3" width="1" height="1.7" fill="#a8a8a8"/><rect x="420" y="9" width="1" height="4" fill="#b0b0b0"/><rect x="423" y="11.3" width="1" height="1.7" fill="#a8a8a8"/><rect x="425" y="11.3" width="1" height="1.7" fill="#a8a8a8"/><rect x="428" y="11.3" width="1" height="1.7" fill="#a8a8a8"/><rect x="431" y="11.3" width="1" height="1.7" fill="#a8a8a8"/><rect x="433" y="0" width="1" height="13" fill="#8a8a8a"/><rect x="436" y="11.3" width="1" height="1.7" fill="#a8a8a8"/><rect x="439" y="11.3" width="1" height="1.7" fill="#a8a8a8"/><rect x="441" y="11.3" width="1" height="1.7" fill="#a8a8a8"/><rect x="444" y="11.3" width="1" height="1.7" fill="#a8a8a8"/><rect x="447" y="9" width="1" height="4" fill="#b0b0b0"/><rect x="449" y="11.3" width="1" height="1.7" fill="#a8a8a8"/><rect x="452" y="11.3" width="1" height="1.7" fill="#a8a8a8"/><rect x="454" y="11.3" width="1" height="1.7" fill="#a8a8a8"/><rect x="457" y="11.3" width="1" height="1.7" fill="#a8a8a8"/><rect x="460" y="9" width="1" height="4" fill="#b0b0b0"/><rect x="462" y="11.3" width="1" height="1.7" fill="#a8a8a8"/><rect x="465" y="11.3" width="1" height="1.7" fill="#a8a8a8"/><rect x="468" y="11.3" width="1" height="1.7" fill="#a8a8a8"/><rect x="470" y="11.3" width="1" height="1.7" fill="#a8a8a8"/><rect x="473" y="9" width="1" height="4" fill="#b0b0b0"/><rect x="476" y="11.3" width="1" height="1.7" fill="#a8a8a8"/><rect x="478" y="11.3" width="1" height="1.7" fill="#a8a8a8"/><rect x="481" y="11.3" width="1" height="1.7" fill="#a8a8a8"/><rect x="484" y="11.3" width="1" height="1.7" fill="#a8a8a8"/><rect x="486" y="9" width="1" height="4" fill="#b0b0b0"/><rect x="489" y="11.3" width="1" height="1.7" fill="#a8a8a8"/><rect x="492" y="11.3" width="1" height="1.7" fill="#a8a8a8"/><rect x="494" y="11.3" width="1" height="1.7" fill="#a8a8a8"/><rect x="497" y="11.3" width="1" height="1.7" fill="#a8a8a8"/><rect x="500" y="0" width="1" height="13" fill="#8a8a8a"/><rect x="502" y="11.3" width="1" height="1.7" fill="#a8a8a8"/><rect x="505" y="11.3" width="1" height="1.7" fill="#a8a8a8"/><rect x="508" y="11.3" width="1" height="1.7" fill="#a8a8a8"/><rect x="510" y="11.3" width="1" height="1.7" fill="#a8a8a8"/><rect x="513" y="9" width="1" height="4" fill="#b0b0b0"/><rect x="516" y="11.3" width="1" height="1.7" fill="#a8a8a8"/><rect x="518" y="11.3" width="1" height="1.7" fill="#a8a8a8"/><rect x="521" y="11.3" width="1" height="1.7" fill="#a8a8a8"/><rect x="524" y="11.3" width="1" height="1.7" fill="#a8a8a8"/><rect x="526" y="9" width="1" height="4" fill="#b0b0b0"/><rect x="529" y="11.3" width="1" height="1.7" fill="#a8a8a8"/><rect x="532" y="11.3" width="1" height="1.7" fill="#a8a8a8"/><rect x="534" y="11.3" width="1" height="1.7" fill="#a8a8a8"/><rect x="537" y="11.3" width="1" height="1.7" fill="#a8a8a8"/><rect x="540" y="9" width="1" height="4" fill="#b0b0b0"/><rect x="542" y="11.3" width="1" height="1.7" fill="#a8a8a8"/><rect x="545" y="11.3" width="1" height="1.7" fill="#a8a8a8"/><rect x="548" y="11.3" width="1" height="1.7" fill="#a8a8a8"/><rect x="550" y="11.3" width="1" height="1.7" fill="#a8a8a8"/><rect x="553" y="9" width="1" height="4" fill="#b0b0b0"/><rect x="556" y="11.3" width="1" height="1.7" fill="#a8a8a8"/><rect x="558" y="11.3" width="1" height="1.7" fill="#a8a8a8"/><rect x="561" y="11.3" width="1" height="1.7" fill="#a8a8a8"/><rect x="564" y="11.3" width="1" height="1.7" fill="#a8a8a8"/><rect x="566" y="0" width="1" height="13" fill="#8a8a8a"/><rect x="569" y="11.3" width="1" height="1.7" fill="#a8a8a8"/><rect x="572" y="11.3" width="1" height="1.7" fill="#a8a8a8"/><rect x="574" y="11.3" width="1" height="1.7" fill="#a8a8a8"/><rect x="577" y="11.3" width="1" height="1.7" fill="#a8a8a8"/><rect x="580" y="9" width="1" height="4" fill="#b0b0b0"/><rect x="582" y="11.3" width="1" height="1.7" fill="#a8a8a8"/><rect x="585" y="11.3" width="1" height="1.7" fill="#a8a8a8"/><rect x="587" y="11.3" width="1" height="1.7" fill="#a8a8a8"/><rect x="590" y="11.3" width="1" height="1.7" fill="#a8a8a8"/><rect x="593" y="9" width="1" height="4" fill="#b0b0b0"/><rect x="595" y="11.3" width="1" height="1.7" fill="#a8a8a8"/><rect x="598" y="11.3" width="1" height="1.7" fill="#a8a8a8"/><rect x="601" y="11.3" width="1" height="1.7" fill="#a8a8a8"/><rect x="603" y="11.3" width="1" height="1.7" fill="#a8a8a8"/><rect x="606" y="9" width="1" height="4" fill="#b0b0b0"/><rect x="609" y="11.3" width="1" height="1.7" fill="#a8a8a8"/><rect x="611" y="11.3" width="1" height="1.7" fill="#a8a8a8"/><rect x="614" y="11.3" width="1" height="1.7" fill="#a8a8a8"/><rect x="617" y="11.3" width="1" height="1.7" fill="#a8a8a8"/><rect x="619" y="9" width="1" height="4" fill="#b0b0b0"/><rect x="622" y="11.3" width="1" height="1.7" fill="#a8a8a8"/><rect x="625" y="11.3" width="1" height="1.7" fill="#a8a8a8"/><rect x="627" y="11.3" width="1" height="1.7" fill="#a8a8a8"/><rect x="630" y="11.3" width="1" height="1.7" fill="#a8a8a8"/><rect x="633" y="0" width="1" height="13" fill="#8a8a8a"/><rect x="635" y="11.3" width="1" height="1.7" fill="#a8a8a8"/><rect x="638" y="11.3" width="1" height="1.7" fill="#a8a8a8"/><rect x="641" y="11.3" width="1" height="1.7" fill="#a8a8a8"/><rect x="643" y="11.3" width="1" height="1.7" fill="#a8a8a8"/><rect x="646" y="9" width="1" height="4" fill="#b0b0b0"/><rect x="649" y="11.3" width="1" height="1.7" fill="#a8a8a8"/><rect x="651" y="11.3" width="1" height="1.7" fill="#a8a8a8"/><rect x="654" y="11.3" width="1" height="1.7" fill="#a8a8a8"/></svg>
<div class="t" style="left:237.0px;top:129.94px;font-size:9.5px;color:#e6e6e6;">100</div>
<div class="t" style="left:303.5px;top:129.94px;font-size:9.5px;color:#e6e6e6;">50</div>
<div class="t" style="left:370.0px;top:129.94px;font-size:9.5px;color:#e6e6e6;">0</div>
<div class="t" style="left:436.5px;top:129.94px;font-size:9.5px;color:#e6e6e6;">50</div>
<div class="t" style="left:503.0px;top:129.94px;font-size:9.5px;color:#e6e6e6;">100</div>
<div class="t" style="left:569.5px;top:129.94px;font-size:9.5px;color:#e6e6e6;">150</div>
<div class="t" style="left:636.0px;top:129.94px;font-size:9.5px;color:#e6e6e6;">200</div>
<div class="t" style="left:702.5px;top:129.94px;font-size:9.5px;color:#e6e6e6;">250</div>
<svg style="left:68px;top:142px" width="13" height="421" viewBox="0 0 13 421"><rect x="0" y="2" width="13" height="1" fill="#8a8a8a"/><rect x="11.3" y="4" width="1.7" height="1" fill="#a8a8a8"/><rect x="11.3" y="7" width="1.7" height="1" fill="#a8a8a8"/><rect x="11.3" y="10" width="1.7" height="1" fill="#a8a8a8"/><rect x="11.3" y="12" width="1.7" height="1" fill="#a8a8a8"/><rect x="9" y="15" width="4" height="1" fill="#b0b0b0"/><rect x="11.3" y="18" width="1.7" height="1" fill="#a8a8a8"/><rect x="11.3" y="20" width="1.7" height="1" fill="#a8a8a8"/><rect x="11.3" y="23" width="1.7" height="1" fill="#a8a8a8"/><rect x="11.3" y="26" width="1.7" height="1" fill="#a8a8a8"/><rect x="9" y="28" width="4" height="1" fill="#b0b0b0"/><rect x="11.3" y="31" width="1.7" height="1" fill="#a8a8a8"/><rect x="11.3" y="34" width="1.7" height="1" fill="#a8a8a8"/><rect x="11.3" y="36" width="1.7" height="1" fill="#a8a8a8"/><rect x="11.3" y="39" width="1.7" height="1" fill="#a8a8a8"/><rect x="9" y="42" width="4" height="1" fill="#b0b0b0"/><rect x="11.3" y="44" width="1.7" height="1" fill="#a8a8a8"/><rect x="11.3" y="47" width="1.7" height="1" fill="#a8a8a8"/><rect x="11.3" y="49" width="1.7" height="1" fill="#a8a8a8"/><rect x="11.3" y="52" width="1.7" height="1" fill="#a8a8a8"/><rect x="9" y="55" width="4" height="1" fill="#b0b0b0"/><rect x="11.3" y="57" width="1.7" height="1" fill="#a8a8a8"/><rect x="11.3" y="60" width="1.7" height="1" fill="#a8a8a8"/><rect x="11.3" y="63" width="1.7" height="1" fill="#a8a8a8"/><rect x="11.3" y="65" width="1.7" height="1" fill="#a8a8a8"/><rect x="0" y="68" width="13" height="1" fill="#8a8a8a"/><rect x="11.3" y="71" width="1.7" height="1" fill="#a8a8a8"/><rect x="11.3" y="73" width="1.7" height="1" fill="#a8a8a8"/><rect x="11.3" y="76" width="1.7" height="1" fill="#a8a8a8"/><rect x="11.3" y="79" width="1.7" height="1" fill="#a8a8a8"/><rect x="9" y="81" width="4" height="1" fill="#b0b0b0"/><rect x="11.3" y="84" width="1.7" height="1" fill="#a8a8a8"/><rect x="11.3" y="87" width="1.7" height="1" fill="#a8a8a8"/><rect x="11.3" y="89" width="1.7" height="1" fill="#a8a8a8"/><rect x="11.3" y="92" width="1.7" height="1" fill="#a8a8a8"/><rect x="9" y="95" width="4" height="1" fill="#b0b0b0"/><rect x="11.3" y="97" width="1.7" height="1" fill="#a8a8a8"/><rect x="11.3" y="100" width="1.7" height="1" fill="#a8a8a8"/><rect x="11.3" y="103" width="1.7" height="1" fill="#a8a8a8"/><rect x="11.3" y="105" width="1.7" height="1" fill="#a8a8a8"/><rect x="9" y="108" width="4" height="1" fill="#b0b0b0"/><rect x="11.3" y="111" width="1.7" height="1" fill="#a8a8a8"/><rect x="11.3" y="113" width="1.7" height="1" fill="#a8a8a8"/><rect x="11.3" y="116" width="1.7" height="1" fill="#a8a8a8"/><rect x="11.3" y="119" width="1.7" height="1" fill="#a8a8a8"/><rect x="9" y="121" width="4" height="1" fill="#b0b0b0"/><rect x="11.3" y="124" width="1.7" height="1" fill="#a8a8a8"/><rect x="11.3" y="127" width="1.7" height="1" fill="#a8a8a8"/><rect x="11.3" y="129" width="1.7" height="1" fill="#a8a8a8"/><rect x="11.3" y="132" width="1.7" height="1" fill="#a8a8a8"/><rect x="0" y="135" width="13" height="1" fill="#8a8a8a"/><rect x="11.3" y="137" width="1.7" height="1" fill="#a8a8a8"/><rect x="11.3" y="140" width="1.7" height="1" fill="#a8a8a8"/><rect x="11.3" y="143" width="1.7" height="1" fill="#a8a8a8"/><rect x="11.3" y="145" width="1.7" height="1" fill="#a8a8a8"/><rect x="9" y="148" width="4" height="1" fill="#b0b0b0"/><rect x="11.3" y="151" width="1.7" height="1" fill="#a8a8a8"/><rect x="11.3" y="153" width="1.7" height="1" fill="#a8a8a8"/><rect x="11.3" y="156" width="1.7" height="1" fill="#a8a8a8"/><rect x="11.3" y="159" width="1.7" height="1" fill="#a8a8a8"/><rect x="9" y="161" width="4" height="1" fill="#b0b0b0"/><rect x="11.3" y="164" width="1.7" height="1" fill="#a8a8a8"/><rect x="11.3" y="167" width="1.7" height="1" fill="#a8a8a8"/><rect x="11.3" y="169" width="1.7" height="1" fill="#a8a8a8"/><rect x="11.3" y="172" width="1.7" height="1" fill="#a8a8a8"/><rect x="9" y="175" width="4" height="1" fill="#b0b0b0"/><rect x="11.3" y="177" width="1.7" height="1" fill="#a8a8a8"/><rect x="11.3" y="180" width="1.7" height="1" fill="#a8a8a8"/><rect x="11.3" y="182" width="1.7" height="1" fill="#a8a8a8"/><rect x="11.3" y="185" width="1.7" height="1" fill="#a8a8a8"/><rect x="9" y="188" width="4" height="1" fill="#b0b0b0"/><rect x="11.3" y="190" width="1.7" height="1" fill="#a8a8a8"/><rect x="11.3" y="193" width="1.7" height="1" fill="#a8a8a8"/><rect x="11.3" y="196" width="1.7" height="1" fill="#a8a8a8"/><rect x="11.3" y="198" width="1.7" height="1" fill="#a8a8a8"/><rect x="0" y="201" width="13" height="1" fill="#8a8a8a"/><rect x="11.3" y="204" width="1.7" height="1" fill="#a8a8a8"/><rect x="11.3" y="206" width="1.7" height="1" fill="#a8a8a8"/><rect x="11.3" y="209" width="1.7" height="1" fill="#a8a8a8"/><rect x="11.3" y="212" width="1.7" height="1" fill="#a8a8a8"/><rect x="9" y="214" width="4" height="1" fill="#b0b0b0"/><rect x="11.3" y="217" width="1.7" height="1" fill="#a8a8a8"/><rect x="11.3" y="220" width="1.7" height="1" fill="#a8a8a8"/><rect x="11.3" y="222" width="1.7" height="1" fill="#a8a8a8"/><rect x="11.3" y="225" width="1.7" height="1" fill="#a8a8a8"/><rect x="9" y="228" width="4" height="1" fill="#b0b0b0"/><rect x="11.3" y="230" width="1.7" height="1" fill="#a8a8a8"/><rect x="11.3" y="233" width="1.7" height="1" fill="#a8a8a8"/><rect x="11.3" y="236" width="1.7" height="1" fill="#a8a8a8"/><rect x="11.3" y="238" width="1.7" height="1" fill="#a8a8a8"/><rect x="9" y="241" width="4" height="1" fill="#b0b0b0"/><rect x="11.3" y="244" width="1.7" height="1" fill="#a8a8a8"/><rect x="11.3" y="246" width="1.7" height="1" fill="#a8a8a8"/><rect x="11.3" y="249" width="1.7" height="1" fill="#a8a8a8"/><rect x="11.3" y="252" width="1.7" height="1" fill="#a8a8a8"/><rect x="9" y="254" width="4" height="1" fill="#b0b0b0"/><rect x="11.3" y="257" width="1.7" height="1" fill="#a8a8a8"/><rect x="11.3" y="260" width="1.7" height="1" fill="#a8a8a8"/><rect x="11.3" y="262" width="1.7" height="1" fill="#a8a8a8"/><rect x="11.3" y="265" width="1.7" height="1" fill="#a8a8a8"/><rect x="0" y="268" width="13" height="1" fill="#8a8a8a"/><rect x="11.3" y="270" width="1.7" height="1" fill="#a8a8a8"/><rect x="11.3" y="273" width="1.7" height="1" fill="#a8a8a8"/><rect x="11.3" y="276" width="1.7" height="1" fill="#a8a8a8"/><rect x="11.3" y="278" width="1.7" height="1" fill="#a8a8a8"/><rect x="9" y="281" width="4" height="1" fill="#b0b0b0"/><rect x="11.3" y="284" width="1.7" height="1" fill="#a8a8a8"/><rect x="11.3" y="286" width="1.7" height="1" fill="#a8a8a8"/><rect x="11.3" y="289" width="1.7" height="1" fill="#a8a8a8"/><rect x="11.3" y="292" width="1.7" height="1" fill="#a8a8a8"/><rect x="9" y="294" width="4" height="1" fill="#b0b0b0"/><rect x="11.3" y="297" width="1.7" height="1" fill="#a8a8a8"/><rect x="11.3" y="300" width="1.7" height="1" fill="#a8a8a8"/><rect x="11.3" y="302" width="1.7" height="1" fill="#a8a8a8"/><rect x="11.3" y="305" width="1.7" height="1" fill="#a8a8a8"/><rect x="9" y="308" width="4" height="1" fill="#b0b0b0"/><rect x="11.3" y="310" width="1.7" height="1" fill="#a8a8a8"/><rect x="11.3" y="313" width="1.7" height="1" fill="#a8a8a8"/><rect x="11.3" y="315" width="1.7" height="1" fill="#a8a8a8"/><rect x="11.3" y="318" width="1.7" height="1" fill="#a8a8a8"/><rect x="9" y="321" width="4" height="1" fill="#b0b0b0"/><rect x="11.3" y="323" width="1.7" height="1" fill="#a8a8a8"/><rect x="11.3" y="326" width="1.7" height="1" fill="#a8a8a8"/><rect x="11.3" y="329" width="1.7" height="1" fill="#a8a8a8"/><rect x="11.3" y="331" width="1.7" height="1" fill="#a8a8a8"/><rect x="0" y="334" width="13" height="1" fill="#8a8a8a"/><rect x="11.3" y="337" width="1.7" height="1" fill="#a8a8a8"/><rect x="11.3" y="339" width="1.7" height="1" fill="#a8a8a8"/><rect x="11.3" y="342" width="1.7" height="1" fill="#a8a8a8"/><rect x="11.3" y="345" width="1.7" height="1" fill="#a8a8a8"/><rect x="9" y="347" width="4" height="1" fill="#b0b0b0"/><rect x="11.3" y="350" width="1.7" height="1" fill="#a8a8a8"/><rect x="11.3" y="353" width="1.7" height="1" fill="#a8a8a8"/><rect x="11.3" y="355" width="1.7" height="1" fill="#a8a8a8"/><rect x="11.3" y="358" width="1.7" height="1" fill="#a8a8a8"/><rect x="9" y="361" width="4" height="1" fill="#b0b0b0"/><rect x="11.3" y="363" width="1.7" height="1" fill="#a8a8a8"/><rect x="11.3" y="366" width="1.7" height="1" fill="#a8a8a8"/><rect x="11.3" y="369" width="1.7" height="1" fill="#a8a8a8"/><rect x="11.3" y="371" width="1.7" height="1" fill="#a8a8a8"/><rect x="9" y="374" width="4" height="1" fill="#b0b0b0"/><rect x="11.3" y="377" width="1.7" height="1" fill="#a8a8a8"/><rect x="11.3" y="379" width="1.7" height="1" fill="#a8a8a8"/><rect x="11.3" y="382" width="1.7" height="1" fill="#a8a8a8"/><rect x="11.3" y="385" width="1.7" height="1" fill="#a8a8a8"/><rect x="9" y="387" width="4" height="1" fill="#b0b0b0"/><rect x="11.3" y="390" width="1.7" height="1" fill="#a8a8a8"/><rect x="11.3" y="393" width="1.7" height="1" fill="#a8a8a8"/><rect x="11.3" y="395" width="1.7" height="1" fill="#a8a8a8"/><rect x="11.3" y="398" width="1.7" height="1" fill="#a8a8a8"/><rect x="0" y="401" width="13" height="1" fill="#8a8a8a"/><rect x="11.3" y="403" width="1.7" height="1" fill="#a8a8a8"/><rect x="11.3" y="406" width="1.7" height="1" fill="#a8a8a8"/><rect x="11.3" y="409" width="1.7" height="1" fill="#a8a8a8"/><rect x="11.3" y="411" width="1.7" height="1" fill="#a8a8a8"/><rect x="9" y="414" width="4" height="1" fill="#b0b0b0"/><rect x="11.3" y="417" width="1.7" height="1" fill="#a8a8a8"/><rect x="11.3" y="419" width="1.7" height="1" fill="#a8a8a8"/></svg>
<div class="t" style="left:70px;top:476.94px;font-size:8.5px;color:#e6e6e6;">2</div>
<div class="t" style="left:70px;top:484.54px;font-size:8.5px;color:#e6e6e6;">0</div>
<div class="t" style="left:70px;top:492.13px;font-size:8.5px;color:#e6e6e6;">0</div>
<div class="t" style="left:70px;top:543.44px;font-size:8.5px;color:#e6e6e6;">2</div>
<div class="t" style="left:70px;top:551.04px;font-size:8.5px;color:#e6e6e6;">5</div>
<div class="t" style="left:70px;top:558.64px;font-size:8.5px;color:#e6e6e6;">0</div>
<div class="a" style="left:66px;top:104px;width:2px;height:473px;background:#2a2a2a;"></div>
<div class="a" style="left:11px;top:463px;width:24px;height:11px;background:#3b3b3b;border-radius:0 0 2px 2px"></div>
<svg style="left:17px;top:461px" width="12" height="11" viewBox="0 0 12 11"><rect x="1.5" y="2" width="9" height="7" fill="none" stroke="#bcbcbc" stroke-width="1.2"/><path d="M3 7 L5.5 4.5 L8 7" fill="none" stroke="#bcbcbc" stroke-width="1"/></svg>
<svg style="left:41px;top:461px" width="20" height="14" viewBox="0 0 20 14"><rect x="3" y="1" width="9" height="8.5" fill="none" stroke="#a8a8a8" stroke-width="1.1"/><path d="M15.5 12.5 H18.5 V9.5Z" fill="#c8c8c8"/></svg>
<div class="a" style="left:5px;top:479px;width:61px;height:1px;background:#484848;"></div>
<svg style="left:914px;top:553px" width="13" height="8" viewBox="0 0 13 8"><path d="M3.3 2 L6.5 5 L9.7 2" fill="none" stroke="#8d8d8d" stroke-width="0.9"/></svg>
<div class="a" style="left:68px;top:563px;width:859px;height:13px;background:#4f4f4f;"></div>
<div class="a" style="left:4px;top:575.3px;width:1066px;height:1.3px;background:#404040;"></div>
<div class="a" style="left:4px;top:576.6px;width:1066px;height:3.2px;background:#4b4b4b;"></div>
<svg style="left:77px;top:565px" width="10" height="10" viewBox="0 0 10 10"><rect x="1.5" y="1.5" width="1.5" height="7" fill="#9a9a9a"/><path d="M8.5 1.5 V8.5 L3.5 5Z" fill="#9a9a9a"/></svg>
<svg style="left:96px;top:565px" width="8" height="10" viewBox="0 0 8 10"><path d="M6 1.5 V8.5 L1.5 5Z" fill="#9a9a9a"/></svg>
<div class="a" style="left:111.8px;top:563.5px;width:75px;height:12.5px;background:#464646;border:1px solid #5c5c5c;border-radius:2px"></div>
<div class="a" style="left:172px;top:563.5px;width:1px;height:12.5px;background:#5c5c5c;"></div>
<div class="t" style="left:115px;top:565.10px;font-size:10px;color:#e6e6e6;">1</div>
<svg style="left:176px;top:568px" width="8" height="5" viewBox="0 0 8 5"><path d="M1 1 L4.0 4 L7 1" fill="none" stroke="#cfcfcf" stroke-width="1"/></svg>
<svg style="left:198px;top:565px" width="8" height="10" viewBox="0 0 8 10"><path d="M2 1.5 V8.5 L6.5 5Z" fill="#9a9a9a"/></svg>
<svg style="left:214px;top:565px" width="10" height="10" viewBox="0 0 10 10"><path d="M1.5 1.5 V8.5 L6.5 5Z" fill="#9a9a9a"/><rect x="7" y="1.5" width="1.5" height="7" fill="#9a9a9a"/></svg>
<svg style="left:234px;top:562.3px" width="18" height="14" viewBox="0 0 18 14"><circle cx="7.5" cy="6.8" r="5.2" fill="#c8c8c8"/><path d="M5 5.2 H7.5 V8.5 H11 V12.5 H5Z" fill="#4f4f4f"/><circle cx="9.5" cy="6.3" r="0.7" fill="#4f4f4f"/><path d="M14 10.3 H17 L15.5 12.2Z" fill="#d0d0d0"/></svg>
<div class="t" style="left:264px;top:565.10px;font-size:10px;color:#e0e0e0;">[基本]&thinsp;（工作）</div>
<svg style="left:349px;top:568px" width="8" height="5" viewBox="0 0 8 5"><path d="M1 1 L4.0 4 L7 1" fill="none" stroke="#cfcfcf" stroke-width="1"/></svg>
<div class="a" style="left:369.5px;top:565.3px;width:8.5px;height:8.5px;border-radius:50%;background:#3cb84a"></div>
<div class="t" style="left:383px;top:565.10px;font-size:10px;color:#e6e6e6;">无错误</div>
<svg style="left:469px;top:568px" width="8" height="5" viewBox="0 0 8 5"><path d="M1 1 L4.0 4 L7 1" fill="none" stroke="#cfcfcf" stroke-width="1"/></svg>
<div class="a" style="left:480px;top:563px;width:434px;height:13px;background:#444444;"></div>
<svg style="left:483px;top:565px" width="8" height="10" viewBox="0 0 8 10"><path d="M5 1.5 L2 5 L5 8.5" fill="none" stroke="#6e6e6e" stroke-width="1"/></svg>
<div class="a" style="left:589px;top:564.3px;width:286px;height:11.4px;background:#6a6a6a;border-radius:5.7px"></div>
<svg style="left:883px;top:565px" width="8" height="10" viewBox="0 0 8 10"><path d="M2.5 1.5 L5.5 5 L2.5 8.5" fill="none" stroke="#6e6e6e" stroke-width="1"/></svg>
<div class="a" style="left:895px;top:563px;width:32px;height:13px;background:#484848;"></div>
<svg style="left:898px;top:564.5px" width="15" height="11" viewBox="0 0 15 11"><rect x="1" y="1" width="13" height="9" fill="none" stroke="#d0d0d0" stroke-width="1.2"/><path d="M7.5 1 V10" stroke="#d0d0d0" stroke-width="1.2"/></svg>
<svg style="left:917px;top:566px" width="10" height="10" viewBox="0 0 10 10"><g fill="#6a6a6a"><rect x="7" y="1" width="1" height="1"/><rect x="5" y="3" width="1" height="1"/><rect x="7" y="3" width="1" height="1"/><rect x="3" y="5" width="1" height="1"/><rect x="5" y="5" width="1" height="1"/><rect x="7" y="5" width="1" height="1"/><rect x="1" y="7" width="1" height="1"/><rect x="3" y="7" width="1" height="1"/><rect x="5" y="7" width="1" height="1"/><rect x="7" y="7" width="1" height="1"/></g></svg>
<div class="a" style="left:927px;top:104px;width:2px;height:473px;background:#3c3c3c;"></div>
<div class="a" style="left:1068.3px;top:53px;width:3.3px;height:524px;background:#3e3e3e;"></div>
<div class="a" style="left:1044.5px;top:53.5px;width:23.8px;height:1px;background:#5a5a5a;"></div>
<div class="a" style="left:929px;top:104px;width:140px;height:10.5px;background:#434343;"></div>
<svg style="left:1056px;top:105px" width="9" height="8" viewBox="0 0 9 8"><path d="M4 2.2 L1.8 4.3 L4 6.4 M7.6 2.2 L5.4 4.3 L7.6 6.4" fill="none" stroke="#d8d8d8" stroke-width="0.9"/></svg>
<svg style="left:988px;top:117px" width="20" height="4" viewBox="0 0 20 4"><rect x="1.0" y="0.5" width="1" height="3" fill="#6e6e6e"/><rect x="3.5" y="0.5" width="1" height="3" fill="#6e6e6e"/><rect x="6.0" y="0.5" width="1" height="3" fill="#6e6e6e"/><rect x="8.5" y="0.5" width="1" height="3" fill="#6e6e6e"/><rect x="11.0" y="0.5" width="1" height="3" fill="#6e6e6e"/><rect x="13.5" y="0.5" width="1" height="3" fill="#6e6e6e"/><rect x="16.0" y="0.5" width="1" height="3" fill="#6e6e6e"/></svg>
<div class="a" style="left:1069px;top:104px;width:2px;height:473px;background:#3c3c3c;"></div>
<div class="a" style="left:934px;top:243.8px;width:129.5px;height:17.8px;background:#3a3a3a;"></div>
<svg style="left:938px;top:128.0px" width="16" height="15" viewBox="0 0 16 15"><defs><linearGradient id="gg" x1="0" x2="1"><stop offset="0" stop-color="#9a9a9a"/><stop offset="1" stop-color="#4a4a4a"/></linearGradient></defs><rect x="1.5" y="2" width="13" height="10" fill="url(#gg)" stroke="#c4c4c4" stroke-width="1.2"/></svg>
<div class="t" style="left:962px;top:130.01px;font-size:11.2px;color:#e0e0e0;">渐变</div>
<svg style="left:938px;top:152.0px" width="16" height="15" viewBox="0 0 16 15"><path d="M1 3.5 L7 1.5 V13 L1 12Z M9 1.5 L15 3.5 V12 L9 13Z" fill="#c4c4c4"/><path d="M8 0 V15" stroke="#c4c4c4" stroke-width="0.8"/></svg>
<div class="t" style="left:962px;top:154.01px;font-size:11.2px;color:#e0e0e0;">页面</div>
<svg style="left:938px;top:175.8px" width="16" height="15" viewBox="0 0 16 15"><path d="M8 1 L15 5 L8 9 L1 5Z" fill="#c4c4c4"/><path d="M1.5 8.5 L8 12.3 L14.5 8.5" fill="none" stroke="#c4c4c4" stroke-width="2"/></svg>
<div class="t" style="left:962px;top:177.81px;font-size:11.2px;color:#e0e0e0;">图层</div>
<svg style="left:938px;top:199.5px" width="16" height="15" viewBox="0 0 16 15"><rect x="1.5" y="4" width="8" height="6" rx="3" fill="none" stroke="#c4c4c4" stroke-width="1.6"/><rect x="6.5" y="4" width="8" height="6" rx="3" fill="none" stroke="#c4c4c4" stroke-width="1.6"/></svg>
<div class="t" style="left:962px;top:201.51px;font-size:11.2px;color:#e0e0e0;">链接</div>
<svg style="left:938px;top:223.0px" width="16" height="15" viewBox="0 0 16 15"><rect x="1" y="2" width="14" height="1.6" fill="#c4c4c4"/><rect x="1" y="6" width="14" height="2" fill="#c4c4c4"/><rect x="1" y="10.5" width="14" height="2.8" fill="#c4c4c4"/></svg>
<div class="t" style="left:962px;top:225.01px;font-size:11.2px;color:#e0e0e0;">描边</div>
<svg style="left:938px;top:246.5px" width="16" height="15" viewBox="0 0 16 15"><path d="M8 1.5 C13 1.5 15.5 4 15.5 7 C15.5 9 14 9 12.5 8.5 C11 8 10.5 10 11.5 11.5 C12 13 10 13.5 8 13.5 C3.5 13.5 0.5 11 0.5 7.5 C0.5 4 3.5 1.5 8 1.5Z" fill="#c4c4c4"/><circle cx="4" cy="8" r="1.3" fill="#3a3a3a"/><circle cx="6.5" cy="10.5" r="1.3" fill="#3a3a3a"/><circle cx="9.5" cy="10.8" r="1.2" fill="#3a3a3a"/><circle cx="6" cy="5" r="1.2" fill="#3a3a3a"/></svg>
<div class="t" style="left:962px;top:248.51px;font-size:11.2px;color:#e0e0e0;">颜色</div>
<svg style="left:938px;top:270.5px" width="16" height="15" viewBox="0 0 16 15"><rect x="1" y="2" width="14" height="11" fill="#c4c4c4"/><g fill="#8a8a8a"><rect x="2.5" y="3.5" width="3" height="3"/><rect x="6.5" y="3.5" width="3" height="3"/><rect x="10.5" y="3.5" width="3" height="3"/><rect x="2.5" y="8.5" width="3" height="3"/><rect x="6.5" y="8.5" width="3" height="3"/><rect x="10.5" y="8.5" width="3" height="3"/></g></svg>
<div class="t" style="left:962px;top:272.51px;font-size:11.2px;color:#e0e0e0;">色板</div>
<svg style="left:938px;top:294.0px" width="16" height="15" viewBox="0 0 16 15"><rect x="1.5" y="1" width="8" height="8" fill="#c4c4c4"/><rect x="5.5" y="5" width="9" height="9" fill="#a8a8a8" stroke="#535353" stroke-width="1"/></svg>
<div class="t" style="left:962px;top:296.01px;font-size:11.2px;color:#e0e0e0;">路径查找器</div>
<svg style="left:938px;top:317.5px" width="16" height="15" viewBox="0 0 16 15"><rect x="1" y="0" width="1.3" height="15" fill="#c4c4c4"/><rect x="3.5" y="2.5" width="6" height="4" fill="#c4c4c4"/><rect x="3.5" y="8.5" width="11" height="4" fill="#c4c4c4"/></svg>
<div class="t" style="left:962px;top:319.51px;font-size:11.2px;color:#e0e0e0;">对齐</div>
<div class="a" style="left:929px;top:338px;width:140px;height:1px;background:#474747;"></div>
<div class="a" style="left:724px;top:112px;width:203px;height:3.5px;background:#3b3b3b;"></div>
<div class="a" style="left:724px;top:115.5px;width:203px;height:22.5px;background:#474747;"></div>
<div class="a" style="left:785px;top:115.5px;width:46.3px;height:22.5px;background:#535353;"></div>
<div class="a" style="left:737.5px;top:115.5px;width:1px;height:22.5px;background:#424242;"></div>
<div class="a" style="left:748.8px;top:115.5px;width:1px;height:22.5px;background:#424242;"></div>
<div class="a" style="left:760.5px;top:115.5px;width:1px;height:22.5px;background:#424242;"></div>
<div class="a" style="left:772.9px;top:115.5px;width:1px;height:22.5px;background:#424242;"></div>
<div class="a" style="left:843.5px;top:115.5px;width:1px;height:22.5px;background:#424242;"></div>
<div class="a" style="left:856px;top:115.5px;width:1px;height:22.5px;background:#424242;"></div>
<div class="a" style="left:872.7px;top:115.5px;width:1px;height:22.5px;background:#424242;"></div>
<svg style="left:729px;top:119px" width="60" height="17" viewBox="0 0 60 17"><g stroke="#7a7a7a" stroke-width="1" fill="none"><path d="M5 4 V6 M5.5 9 V12 M15 7 V9 M27 5 V12 M35 8.5 H37 M48 5 V7 M48 10 V12"/></g></svg>
<svg style="left:789px;top:122px" width="6" height="12" viewBox="0 0 6 12"><path d="M1 4.5 L3 2 L5 4.5 M1 7.5 L3 10 L5 7.5" fill="none" stroke="#cfcfcf" stroke-width="0.9"/></svg>
<div class="t" style="left:799.5px;top:122.46px;font-size:11.3px;color:#e6e6e6;">颜色</div>
<svg style="left:843px;top:119px" width="40" height="17" viewBox="0 0 40 17"><g stroke="#7a7a7a" stroke-width="1" fill="none"><path d="M4 7 V12 M20 5 V13"/></g></svg>
<div class="a" style="left:863px;top:120px;width:9.7px;height:16px;overflow:hidden"><div class="t" style="left:0;top:2.8px;font-size:10.5px;color:#9a9a9a">欢</div></div>
<svg style="left:891px;top:123px" width="12" height="10" viewBox="0 0 12 10"><path d="M1.5 1.5 L5 5 L1.5 8.5 M6 1.5 L9.5 5 L6 8.5" fill="none" stroke="#e0e0e0" stroke-width="1.2"/></svg>
<div class="a" style="left:907px;top:122px;width:1px;height:10px;background:#a0a0a0;"></div>
<svg style="left:912px;top:123px" width="12" height="10" viewBox="0 0 12 10"><path d="M1 1.5 H11 M1 4 H11 M1 6.5 H11 M1 9 H11" stroke="#cfcfcf" stroke-width="1"/></svg>
<div class="a" style="left:724px;top:138px;width:203px;height:117.5px;background:#535353;"></div>
<div class="a" style="left:724px;top:255.5px;width:203px;height:1.5px;background:#3c3c3c;"></div>
<div class="a" style="left:744px;top:152px;width:15.5px;height:16px;background:#000;"></div>
<div class="a" style="left:748px;top:156px;width:7.5px;height:8px;background:#535353;"></div>
<div class="a" style="left:735px;top:143px;width:16.5px;height:17px;background:#fff;outline:0.5px solid #888"></div>
<svg style="left:735px;top:143px" width="17" height="17" viewBox="0 0 17 17"><path d="M0.8 16.2 L16.2 0.8" stroke="#ff1010" stroke-width="1.6"/></svg>
<svg style="left:752px;top:141px" width="9" height="9" viewBox="0 0 9 9"><path d="M1.5 2.5 H6 V7 M4.5 5.5 L6 7.3 L7.5 5.5" fill="none" stroke="#cfcfcf" stroke-width="0.9"/></svg>
<div class="a" style="left:729.5px;top:174px;width:16.5px;height:16px;background:#3f3f3f;border-radius:2px"></div>
<div class="a" style="left:733.5px;top:178px;width:8px;height:8px;border:1px solid #cfcfcf"></div>
<div class="t" style="left:751.5px;top:177.61px;font-size:11px;color:#d0d0d0;font-family:Liberation Serif,serif;font-weight:bold">T</div>
<div class="t" style="left:733.5px;top:214.58px;font-size:8px;color:#bdbdbd;">t..</div>
<div class="a" style="left:749px;top:210px;width:15.5px;height:16.3px;background:#000;"></div>
<div class="t" style="left:769px;top:147.01px;font-size:10.8px;color:#e6e6e6;">C</div>
<div class="a" style="left:786px;top:147.8px;width:86px;height:4.5px;border:1px solid #5e5e5e;background:#575757;border-radius:1px"></div>
<div class="a" style="left:879.5px;top:143.3px;width:30px;height:16.5px;border:1px solid #626262;background:#484848;border-radius:2px"></div>
<div class="t" style="left:911.5px;top:147.16px;font-size:10.5px;color:#e6e6e6;">%</div>
<div class="t" style="left:767.5px;top:169.01px;font-size:10.8px;color:#e6e6e6;">M</div>
<div class="a" style="left:786px;top:169.8px;width:86px;height:4.5px;border:1px solid #5e5e5e;background:#575757;border-radius:1px"></div>
<div class="a" style="left:879.5px;top:165.3px;width:30px;height:16.5px;border:1px solid #626262;background:#484848;border-radius:2px"></div>
<div class="t" style="left:911.5px;top:169.16px;font-size:10.5px;color:#e6e6e6;">%</div>
<div class="t" style="left:769px;top:190.91px;font-size:10.8px;color:#e6e6e6;">Y</div>
<div class="a" style="left:786px;top:191.7px;width:86px;height:4.5px;border:1px solid #5e5e5e;background:#575757;border-radius:1px"></div>
<div class="a" style="left:879.5px;top:187.2px;width:30px;height:16.5px;border:1px solid #626262;background:#484848;border-radius:2px"></div>
<div class="t" style="left:911.5px;top:191.05px;font-size:10.5px;color:#e6e6e6;">%</div>
<div class="t" style="left:769px;top:212.91px;font-size:10.8px;color:#e6e6e6;">K</div>
<div class="a" style="left:786px;top:213.7px;width:86px;height:4.5px;border:1px solid #5e5e5e;background:#575757;border-radius:1px"></div>
<div class="a" style="left:879.5px;top:209.2px;width:30px;height:16.5px;border:1px solid #626262;background:#484848;border-radius:2px"></div>
<div class="t" style="left:911.5px;top:213.05px;font-size:10.5px;color:#e6e6e6;">%</div>
<div class="a" style="left:745px;top:236.7px;width:164px;height:12.3px;background:linear-gradient(to bottom,rgba(255,255,255,1) 0%,rgba(255,255,255,0) 50%,rgba(0,0,0,0) 50%,rgba(0,0,0,1) 100%),linear-gradient(to right,#e60000 0%,#ffee00 20%,#00aa00 35%,#00b0f0 50%,#000090 65%,#a000a0 80%,#e0004a 90%,#dd0000 100%)"></div>
<div class="a" style="left:731px;top:236.7px;width:14px;height:12.3px;background:#fff;"></div>
<svg style="left:731px;top:236.7px" width="14" height="13" viewBox="0 0 14 13"><path d="M0.5 12.3 L13.5 0.5" stroke="#ff1010" stroke-width="1.6"/></svg>
<div class="a" style="left:909px;top:236.7px;width:13px;height:6.2px;background:#fff;"></div>
<div class="a" style="left:909px;top:242.9px;width:13px;height:6.1px;background:#000;"></div>
<div class="a" style="left:242px;top:579.5px;width:34px;height:29px;background:#4a4450;"></div>
<svg style="left:10px;top:586.5px" width="15" height="15" viewBox="0 0 15 15"><g fill="#ffffff"><path d="M1 2.5 L6.5 1.7 V7 H1Z"/><path d="M7.5 1.5 L14 0.5 V7 H7.5Z"/><path d="M1 8 H6.5 V13.3 L1 12.5Z"/><path d="M7.5 8 H14 V14.5 L7.5 13.5Z"/></g></svg>
<svg style="left:43px;top:586.5px" width="15" height="15" viewBox="0 0 15 15"><circle cx="9" cy="5.8" r="4.2" fill="none" stroke="#e8e8e8" stroke-width="1.3"/><path d="M6 8.8 L1.5 13.3" stroke="#e8e8e8" stroke-width="1.5"/></svg>
<svg style="left:76px;top:586.5px" width="15" height="15" viewBox="0 0 15 15"><circle cx="7.5" cy="7.5" r="5.3" fill="none" stroke="#ffffff" stroke-width="1.8"/></svg>
<svg style="left:110px;top:586.5px" width="16" height="15" viewBox="0 0 16 15"><g fill="none" stroke="#e8e8e8" stroke-width="1.2"><rect x="3.5" y="3" width="6" height="9"/><path d="M1 3 V12 M12 3 V6 M12 9 V12"/></g></svg>
<svg style="left:146px;top:584.5px" width="18" height="18" viewBox="0 0 18 18"><path d="M1 3 H7 L9 5 H17 V16 H1Z" fill="#e8b028"/><path d="M1 6.5 H17 V16 H1Z" fill="#ffd35c"/><rect x="5" y="11" width="8" height="5" fill="#2b78c8"/></svg>
<svg style="left:179px;top:584.5px" width="19" height="19" viewBox="0 0 19 19"><defs><linearGradient id="eg" x1="0" y1="0" x2="1" y2="1"><stop offset="0" stop-color="#35c1f1"/><stop offset="0.6" stop-color="#1f87d8"/><stop offset="1" stop-color="#50e07a"/></linearGradient></defs><circle cx="9.5" cy="9.5" r="8.5" fill="url(#eg)"/><path d="M5 11 C5 7 9 5.5 12 7 C14 8 14 10 12 10.5 H7 C7 13 10 14.5 14 13 C12 16 5.5 16 5 11Z" fill="#1b3b7a"/></svg>
<svg style="left:214px;top:585.5px" width="18" height="17" viewBox="0 0 18 17"><rect x="1" y="1" width="16" height="15" rx="1.5" fill="#001e36" stroke="#31a8ff" stroke-width="1.3"/><text x="3.2" y="12.3" font-family="Liberation Sans" font-size="9" fill="#31a8ff" font-weight="bold">Ps</text></svg>
<svg style="left:249px;top:585.5px" width="18" height="17" viewBox="0 0 18 17"><rect x="1" y="1" width="16" height="15" rx="1.5" fill="#49021f" stroke="#ff3366" stroke-width="1.3"/><text x="5" y="12.3" font-family="Liberation Sans" font-size="9" fill="#ff3366" font-weight="bold">Id</text></svg>
<svg style="left:282px;top:584.5px" width="20" height="18" viewBox="0 0 20 18"><rect x="6" y="1.5" width="13" height="15" rx="1.5" fill="#2b7cd3"/><rect x="6" y="1.5" width="13" height="4" fill="#41a5ee"/><rect x="6" y="12" width="13" height="4.5" fill="#185abd"/><rect x="1" y="4.5" width="10" height="9.5" rx="1" fill="#185abd"/><text x="2" y="12.3" font-family="Liberation Sans" font-size="7.5" fill="#fff" font-weight="bold">W</text></svg>
<div class="a" style="left:175px;top:606.3px;width:29px;height:1.7px;background:#86b4ea;"></div>
<div class="a" style="left:210px;top:606.3px;width:28.5px;height:1.7px;background:#86b4ea;"></div>
<div class="a" style="left:242.5px;top:606.3px;width:33.0px;height:1.7px;background:#86b4ea;"></div>
<div class="a" style="left:278.5px;top:606.3px;width:29.5px;height:1.7px;background:#86b4ea;"></div>
<div class="a" style="left:844px;top:586px;width:14px;height:14px;border-radius:50%;background:radial-gradient(circle at 40% 40%,#ffd84a,#f5a300)"></div>
<div class="t" style="left:865px;top:588.36px;font-size:10.5px;color:#ffffff;">9°C</div>
<div class="t" style="left:887.5px;top:588.36px;font-size:10.5px;color:#ffffff;">晴朗</div>
<svg style="left:918px;top:588px" width="12" height="9" viewBox="0 0 12 9"><path d="M1 7.5 L5.8 2.8 L10.6 7.5" fill="none" stroke="#ffffff" stroke-width="1.2"/></svg>
<div class="a" style="left:936px;top:586.5px;width:10px;height:12px;background:#1296db;border-radius:2px 2px 5px 5px"></div>
<div class="t" style="left:937.5px;top:587.10px;font-size:10px;color:#ffffff;font-weight:bold">*</div>
<div class="t" style="left:953px;top:588.11px;font-size:11px;color:#ffffff;">中</div>
<div class="a" style="left:972px;top:588px;width:12px;height:11px;background:#e8532a;border-radius:3px;transform:skewX(-10deg)"></div>
<div class="t" style="left:974.3px;top:589.29px;font-size:9px;color:#ffffff;font-weight:bold">S</div>
<div class="t" style="left:1006px;top:583.05px;font-size:9.5px;color:#ffffff;">13:03</div>
<div class="t" style="left:993px;top:595.85px;font-size:9.5px;color:#ffffff;">2021/12/13</div>
<svg style="left:1049px;top:585px" width="20" height="20" viewBox="0 0 20 20"><path d="M2 2 H14 V12 H6 L3 15 V12 H2Z" fill="none" stroke="#fff" stroke-width="1.3"/><path d="M4.5 5.5 H11.5 M4.5 8.5 H11.5" stroke="#fff" stroke-width="1"/><circle cx="14" cy="14" r="5" fill="#211b26" stroke="#fff" stroke-width="1"/><text x="11.3" y="17.5" font-family="Liberation Sans" font-size="8.5" fill="#fff">3</text></svg>
<div class="a" style="left:5px;top:50px;width:217px;height:414px;background:rgba(0,0,0,.25);filter:blur(1px);"></div>
<div class="a" style="left:5px;top:50px;width:216px;height:413px;background:#f2f2f2;border:1px solid #cccccc;overflow:hidden">
<div class="t" style="left:20px;top:3.85px;font-size:9px;color:#000000">新建(N)</div>
<svg style="left:204.5px;top:4.65px" width="6" height="7"><path d="M1.3 1 L4 3.3 L1.3 5.6" fill="none" stroke="#6a6a6a" stroke-width="0.9"/></svg>
<div class="t" style="left:20px;top:17.55px;font-size:9px;color:#000000">打开(O)...</div>
<div class="t" style="right:12px;top:17.15px;font-size:9.3px;color:#000000">Ctrl+O</div>
<div class="t" style="left:20px;top:31.25px;font-size:9px;color:#000000">在 Bridge 中浏览(W)...</div>
<div class="t" style="right:12px;top:30.85px;font-size:9.3px;color:#000000">Ctrl+Alt+O</div>
<div class="t" style="left:20px;top:44.95px;font-size:9px;color:#000000">最近打开文件(R)</div>
<svg style="left:204.5px;top:45.75px" width="6" height="7"><path d="M1.3 1 L4 3.3 L1.3 5.6" fill="none" stroke="#6a6a6a" stroke-width="0.9"/></svg>
<div class="a" style="left:19px;top:55.75px;width:195px;height:1px;background:#d9d9d9"></div>
<div class="t" style="left:20px;top:61.95px;font-size:9px;color:#000000">关闭(C)</div>
<div class="t" style="right:12px;top:61.55px;font-size:9.3px;color:#000000">Ctrl+W</div>
<div class="t" style="left:20px;top:75.65px;font-size:9px;color:#000000">存储(S)</div>
<div class="t" style="right:12px;top:75.25px;font-size:9.3px;color:#000000">Ctrl+S</div>
<div class="t" style="left:20px;top:89.35px;font-size:9px;color:#000000">存储为(A)...</div>
<div class="t" style="right:12px;top:88.95px;font-size:9.3px;color:#000000">Ctrl+Shift+S</div>
<div class="t" style="left:20px;top:103.05px;font-size:9px;color:#a3a3a3">登记(I)...</div>
<div class="t" style="left:20px;top:116.75px;font-size:9px;color:#000000">存储副本(Y)...</div>
<div class="t" style="right:12px;top:116.35px;font-size:9.3px;color:#000000">Ctrl+Alt+S</div>
<div class="t" style="left:20px;top:130.45px;font-size:9px;color:#a3a3a3">恢复(V)</div>
<div class="a" style="left:19px;top:141.25px;width:195px;height:1px;background:#d9d9d9"></div>
<div class="t" style="left:20px;top:147.45px;font-size:9px;color:#000000">搜索 Adobe Stock...</div>
<div class="t" style="left:20px;top:161.15px;font-size:9px;color:#000000">置入(L)...</div>
<div class="t" style="right:12px;top:160.75px;font-size:9.3px;color:#000000">Ctrl+D</div>
<div class="t" style="left:20px;top:174.85px;font-size:9px;color:#000000">从 CC 库置入...</div>
<div class="t" style="left:20px;top:188.55px;font-size:9px;color:#000000">导入 XML(I)...</div>
<div class="a" style="left:19px;top:199.35px;width:195px;height:1px;background:#d9d9d9"></div>
<div class="t" style="left:20px;top:205.55px;font-size:9px;color:#000000">Adobe PDF 预设(B)</div>
<svg style="left:204.5px;top:206.35px" width="6" height="7"><path d="M1.3 1 L4 3.3 L1.3 5.6" fill="none" stroke="#6a6a6a" stroke-width="0.9"/></svg>
<div class="t" style="left:20px;top:219.25px;font-size:9px;color:#000000">导出(E)...</div>
<div class="t" style="right:12px;top:218.85px;font-size:9.3px;color:#000000">Ctrl+E</div>
<div class="a" style="left:19px;top:230.05px;width:195px;height:1px;background:#d9d9d9"></div>
<div class="t" style="left:20px;top:236.25px;font-size:9px;color:#000000">Publish Online...</div>
<div class="t" style="left:20px;top:249.95px;font-size:9px;color:#000000">Publish Online 功能板...</div>
<div class="a" style="left:19px;top:260.75px;width:195px;height:1px;background:#d9d9d9"></div>
<div class="t" style="left:20px;top:266.95px;font-size:9px;color:#000000">文档预设(M)</div>
<svg style="left:204.5px;top:267.75px" width="6" height="7"><path d="M1.3 1 L4 3.3 L1.3 5.6" fill="none" stroke="#6a6a6a" stroke-width="0.9"/></svg>
<div class="a" style="left:1px;top:277.95px;width:213px;height:13.5px;background:#91c9f7"></div>
<div class="t" style="left:20px;top:280.65px;font-size:9px;color:#000000">文档设置(D)...</div>
<div class="t" style="right:12px;top:280.25px;font-size:9.3px;color:#000000">Ctrl+Alt+P</div>
<div class="a" style="left:19px;top:291.45px;width:195px;height:1px;background:#d9d9d9"></div>
<div class="t" style="left:20px;top:297.65px;font-size:9px;color:#000000">用户(.)...</div>
<div class="t" style="left:20px;top:311.35px;font-size:9px;color:#000000">文件信息(F)...</div>
<div class="t" style="right:12px;top:310.95px;font-size:9.3px;color:#000000">Ctrl+Alt+Shift+I</div>
<div class="a" style="left:19px;top:322.15px;width:195px;height:1px;background:#d9d9d9"></div>
<div class="t" style="left:20px;top:328.35px;font-size:9px;color:#000000">打包(G)...</div>
<div class="t" style="left:20px;top:342.05px;font-size:9px;color:#000000">打印预设(T)</div>
<svg style="left:204.5px;top:342.85px" width="6" height="7"><path d="M1.3 1 L4 3.3 L1.3 5.6" fill="none" stroke="#6a6a6a" stroke-width="0.9"/></svg>
<div class="t" style="left:20px;top:355.75px;font-size:9px;color:#000000">打印(P)...</div>
<div class="t" style="right:12px;top:355.35px;font-size:9.3px;color:#000000">Ctrl+P</div>
<div class="t" style="left:20px;top:369.45px;font-size:9px;color:#000000">打印小册子(K)...</div>
<div class="t" style="left:20px;top:383.15px;font-size:9px;color:#000000">打印/导出网格(R)...</div>
<div class="t" style="right:12px;top:382.75px;font-size:9.3px;color:#000000">Ctrl+Alt+Shift+P</div>
<div class="a" style="left:19px;top:393.95px;width:195px;height:1px;background:#d9d9d9"></div>
<div class="t" style="left:20px;top:400.15px;font-size:9px;color:#000000">退出(X)</div>
<div class="t" style="right:12px;top:399.75px;font-size:9.3px;color:#000000">Ctrl+Q</div>
</div>
</body></html>
